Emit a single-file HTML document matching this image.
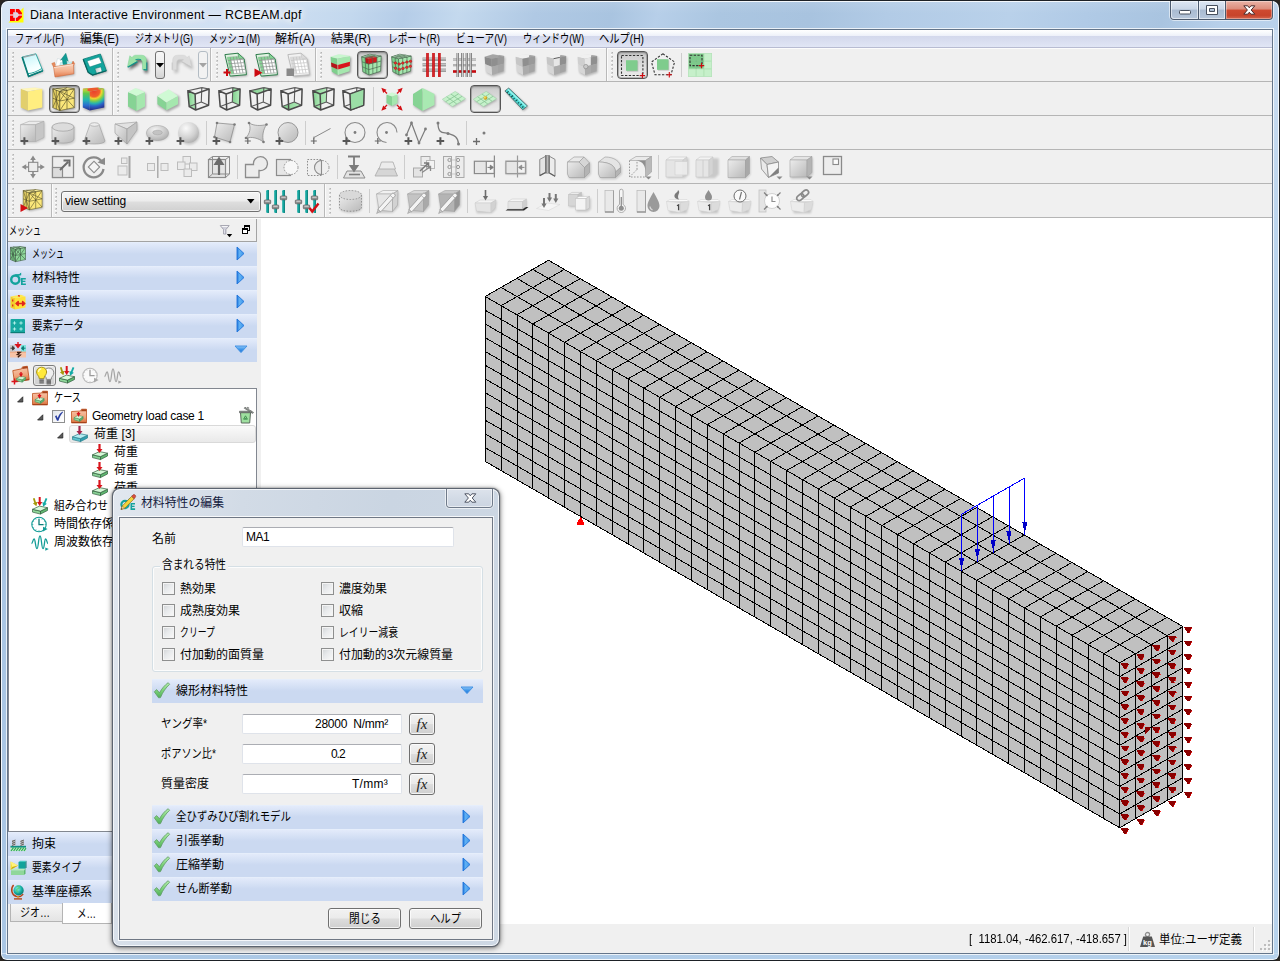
<!DOCTYPE html>
<html lang="ja"><head><meta charset="utf-8"><title>Diana Interactive Environment — RCBEAM.dpf</title>
<style>
html,body{margin:0;padding:0}
body{width:1280px;height:961px;overflow:hidden;background:#2b2620;position:relative;font-family:"Liberation Sans", sans-serif;font-size:12px}
body div,body span.tx,body svg.jp,body svg.ic{position:absolute;box-sizing:border-box}
span.tx{white-space:pre;font-family:"Liberation Sans", sans-serif}
svg.jp,svg.ic{overflow:visible;display:block}
svg.jp text{font-family:"Liberation Sans","Noto Sans CJK JP",sans-serif;font-size:12px}
</style></head><body>
<div style="left:0px;top:0px;width:1280px;height:961px;border-radius:8px 8px 7px 7px;background:#1d2126;"></div>
<div style="left:1px;top:1px;width:1278px;height:959px;border-radius:7px 7px 6px 6px;background:#f4f8fc;"></div>
<div style="left:2px;top:2px;width:1276px;height:957px;border-radius:6px 6px 5px 5px;background:linear-gradient(105deg,#d7e5f4 0%,#d0e0f2 17%,#c3d8ee 23%,#b5cde8 26.5%,#c4d9ee 30%,#b0c9e4 35%,#a9c4e0 40%,#b7cfe9 43%,#abc6e1 47%,#a8c3df 53%,#b2cbe6 58%,#b9d1ea 66%,#b0cae6 71%,#a9c4e0 76%,#b8d0ea 80%,#bcd4ec 90%,#c5daef 100%);"></div>
<div style="left:2px;top:30px;width:5px;height:923px;background:linear-gradient(#c9dcf1 0%,#a9c6e4 35%,#a9c6e4 100%);"></div>
<div style="left:1273px;top:30px;width:5px;height:923px;background:linear-gradient(#cbddf1 0%,#b7d2ec 30%,#b7d2ec 100%);"></div>
<div style="left:2px;top:954px;width:1276px;height:5px;border-radius:0 0 5px 5px;background:linear-gradient(90deg,#a9c6e4,#b7d2ec);"></div>
<div style="left:2px;top:2px;width:1276px;height:26px;border-radius:6px 6px 0 0;background:linear-gradient(rgba(255,255,255,.10),rgba(255,255,255,0) 45%);"></div>
<div style="left:6px;top:28px;width:1268px;height:927px;border:1px solid rgba(255,255,255,.75);"></div>
<div style="left:7px;top:29px;width:1266px;height:925px;border:1px solid #64758a;background:#f0f0f0;"></div>
<svg class="ic" style="left:8px;top:7px" width="16" height="16" viewBox="0 0 16 16"><path d="M15.5 0.5V15.5H0.5z" fill="#ffff00"/><path d="M2 2H11L14 6V10L10 14H2z" fill="#ff0000"/><path d="M5.2 5.2H9.2L10.8 7.2V8.8L9 10.8H5.2z" fill="#cfe0f3"/><path d="M2 7.3H14V8.7H2zM6.8 2H8V14H6.8z" fill="#f3c9cf" opacity=".9"/></svg>
<span class="tx" style="left:30px;top:6.5px;font-size:12.4px;line-height:17px;color:#000;text-shadow:0 0 6px #fff,0 0 10px #fff,0 0 14px rgba(255,255,255,.9);letter-spacing:0.306px">Diana Interactive Environment — RCBEAM.dpf</span>
<div style="left:1169px;top:1px;width:105px;height:20px;border-radius:0 0 5px 5px;background:rgba(255,255,255,.55);"></div>
<div style="left:1170px;top:1px;width:103px;height:19px;border-radius:0 0 4px 4px;background:#4b5a6e;"></div>
<div style="left:1171px;top:1px;width:27px;height:18px;border-radius:0 0 0 3px;background:linear-gradient(#dde7f3 0%,#c9d6e6 45%,#a9bbd1 50%,#b6c7db 100%);box-shadow:inset 0 0 0 1px rgba(255,255,255,.55);"></div>
<div style="left:1199px;top:1px;width:26px;height:18px;background:linear-gradient(#dde7f3 0%,#c9d6e6 45%,#a9bbd1 50%,#b6c7db 100%);box-shadow:inset 0 0 0 1px rgba(255,255,255,.55);"></div>
<div style="left:1226px;top:1px;width:46px;height:18px;border-radius:0 0 3px 0;background:linear-gradient(#eab3a6 0%,#dc8c7b 45%,#cf4a30 50%,#c8442b 80%,#d4674f 100%);box-shadow:inset 0 0 0 1px rgba(255,255,255,.35);"></div>
<svg class="ic" style="left:1178px;top:9px" width="14" height="7"><rect x="1.500" y="1.500" width="11" height="3.500" rx=".9" fill="#fff" stroke="#47505e" stroke-width="1"/></svg>
<svg class="ic" style="left:1205px;top:4px" width="14" height="12"><path d="M1.500 1.500h11v9h-11z M4.500 4.500v3h5v-3z" fill="#fff" fill-rule="evenodd" stroke="#47505e" stroke-width="1"/></svg>
<svg class="ic" style="left:1243px;top:5px" width="14" height="12"><path d="M0.800 0.800h3.900l1.600 2l1.600-2h3.900l-3.600 4.200l3.600 4.200h-3.900l-1.600-2l-1.600 2h-3.900l3.600-4.200z" fill="#fff" stroke="#4a2a2a" stroke-width="1" stroke-linejoin="round"/></svg>
<div style="left:8px;top:30px;width:1264px;height:18px;background:linear-gradient(#ffffff 0%,#f6f8fc 18%,#edf0f9 35%,#d3d8ec 36%,#d9def0 65%,#e1e6f5 100%);border-bottom:1px solid #b8bcd2;"></div>
<div style="left:8px;top:48px;width:1264px;height:1px;background:#fcfcfc;"></div>
<svg class="jp" style="left:15px;top:31px" width="50" height="15"><text x="0" y="12" fill="#000" textLength="49" lengthAdjust="spacingAndGlyphs">ファイル(F)</text></svg>
<svg class="jp" style="left:80px;top:31px" width="40" height="15"><text x="0" y="12" fill="#000" textLength="39" lengthAdjust="spacingAndGlyphs">編集(E)</text></svg>
<svg class="jp" style="left:135px;top:31px" width="59" height="15"><text x="0" y="12" fill="#000" textLength="58" lengthAdjust="spacingAndGlyphs">ジオメトリ(G)</text></svg>
<svg class="jp" style="left:209px;top:31px" width="52" height="15"><text x="0" y="12" fill="#000" textLength="51" lengthAdjust="spacingAndGlyphs">メッシュ(M)</text></svg>
<svg class="jp" style="left:275px;top:31px" width="41" height="15"><text x="0" y="12" fill="#000" textLength="40" lengthAdjust="spacingAndGlyphs">解析(A)</text></svg>
<svg class="jp" style="left:331px;top:31px" width="41" height="15"><text x="0" y="12" fill="#000" textLength="40" lengthAdjust="spacingAndGlyphs">結果(R)</text></svg>
<svg class="jp" style="left:388px;top:31px" width="53" height="15"><text x="0" y="12" fill="#000" textLength="52" lengthAdjust="spacingAndGlyphs">レポート(R)</text></svg>
<svg class="jp" style="left:456px;top:31px" width="52" height="15"><text x="0" y="12" fill="#000" textLength="51" lengthAdjust="spacingAndGlyphs">ビューア(V)</text></svg>
<svg class="jp" style="left:523px;top:31px" width="62" height="15"><text x="0" y="12" fill="#000" textLength="61" lengthAdjust="spacingAndGlyphs">ウィンドウ(W)</text></svg>
<svg class="jp" style="left:599px;top:31px" width="46" height="15"><text x="0" y="12" fill="#000" textLength="45" lengthAdjust="spacingAndGlyphs">ヘルプ(H)</text></svg>
<div style="left:8px;top:81px;width:1264px;height:1px;background:#b5b5b5;"></div>
<div style="left:8px;top:115px;width:1264px;height:1px;background:#b5b5b5;"></div>
<div style="left:8px;top:149px;width:1264px;height:1px;background:#b5b5b5;"></div>
<div style="left:8px;top:183px;width:1264px;height:1px;background:#b5b5b5;"></div>
<div style="left:8px;top:217px;width:1264px;height:1px;background:#b5b5b5;"></div>
<div style="left:8px;top:218px;width:1264px;height:1px;background:#fbfbfb;"></div>
<div style="left:261px;top:218px;width:1011px;height:706px;background:#fff;"></div>
<div style="left:8px;top:924px;width:1264px;height:29px;background:#f0f0f0;"></div>
<div style="left:1128px;top:927px;width:1px;height:24px;background:#d7d7d7;"></div>
<div style="left:1129px;top:927px;width:1px;height:24px;background:#fff;"></div>
<div style="left:1253px;top:927px;width:1px;height:24px;background:#d7d7d7;"></div>
<div style="left:1254px;top:927px;width:1px;height:24px;background:#fff;"></div>
<svg class="ic" style="left:1260px;top:940px" width="12" height="12"><rect x="8" y="0" width="2" height="2" fill="#bdbdbd"/><rect x="10" y="2" width="1" height="1" fill="#fff"/><rect x="8" y="4" width="2" height="2" fill="#bdbdbd"/><rect x="10" y="6" width="1" height="1" fill="#fff"/><rect x="4" y="4" width="2" height="2" fill="#bdbdbd"/><rect x="6" y="6" width="1" height="1" fill="#fff"/><rect x="8" y="8" width="2" height="2" fill="#bdbdbd"/><rect x="10" y="10" width="1" height="1" fill="#fff"/><rect x="4" y="8" width="2" height="2" fill="#bdbdbd"/><rect x="6" y="10" width="1" height="1" fill="#fff"/><rect x="0" y="8" width="2" height="2" fill="#bdbdbd"/><rect x="2" y="10" width="1" height="1" fill="#fff"/></svg>
<span class="tx" style="left:969px;top:930px;font-size:13.5px;line-height:17.5px;color:#000;transform:scaleX(0.8398);transform-origin:0 0;">[  1181.04, -462.617, -418.657 ]</span>
<svg class="ic" style="left:1139px;top:931px" width="17" height="17"><circle cx="8.5" cy="3.6" r="2.1" fill="none" stroke="#8e8e8e" stroke-width="1.3"/><path d="M4.2 5.5h8.6l3.2 10.5h-15z" fill="#555"/><text x="8.5" y="14" font-family="Liberation Sans" font-size="7.5" font-weight="bold" fill="#fff" text-anchor="middle">kg</text></svg>
<svg class="jp" style="left:1159px;top:931.5px" width="84" height="15"><text x="0" y="12" fill="#000" textLength="83" lengthAdjust="spacingAndGlyphs">単位:ユーザ定義</text></svg>
<svg class="ic" style="left:12px;top:48px" width="3" height="33"><rect x="0" y="4" width="2" height="2" fill="#d2d2d2"/><rect x="1" y="4" width="1" height="1" fill="#b4b4b4"/><rect x="0" y="6" width="1" height="1" fill="#ffffff"/><rect x="0" y="8" width="2" height="2" fill="#d2d2d2"/><rect x="1" y="8" width="1" height="1" fill="#b4b4b4"/><rect x="0" y="10" width="1" height="1" fill="#ffffff"/><rect x="0" y="12" width="2" height="2" fill="#d2d2d2"/><rect x="1" y="12" width="1" height="1" fill="#b4b4b4"/><rect x="0" y="14" width="1" height="1" fill="#ffffff"/><rect x="0" y="16" width="2" height="2" fill="#d2d2d2"/><rect x="1" y="16" width="1" height="1" fill="#b4b4b4"/><rect x="0" y="18" width="1" height="1" fill="#ffffff"/><rect x="0" y="20" width="2" height="2" fill="#d2d2d2"/><rect x="1" y="20" width="1" height="1" fill="#b4b4b4"/><rect x="0" y="22" width="1" height="1" fill="#ffffff"/><rect x="0" y="24" width="2" height="2" fill="#d2d2d2"/><rect x="1" y="24" width="1" height="1" fill="#b4b4b4"/><rect x="0" y="26" width="1" height="1" fill="#ffffff"/><rect x="0" y="28" width="2" height="2" fill="#d2d2d2"/><rect x="1" y="28" width="1" height="1" fill="#b4b4b4"/><rect x="0" y="30" width="1" height="1" fill="#ffffff"/></svg>
<svg class="ic" style="left:20px;top:53px" width="24" height="24"><defs><filter id="sh1" x="-30%" y="-30%" width="160%" height="160%"><feGaussianBlur stdDeviation="1.1"/></filter></defs><path d="M2.200 4L15.900 0.800L22.800 17.800L8.600 23.400z" transform="translate(1,1.2)" fill="#000" opacity="0.28" filter="url(#sh1)"/><defs><linearGradient id="nw1" x1="0" y1="0" x2=".35" y2="1"><stop offset="0" stop-color="#bdf3f8"/><stop offset=".7" stop-color="#f2ffff"/><stop offset="1" stop-color="#ffffff"/></linearGradient></defs><polygon points="2.2,4 15.9,0.8 22.8,17.8 8.6,23.4" fill="url(#nw1)" stroke="#109b94" stroke-width="0.8" stroke-linejoin="round"/><path d="M3 4.300L15.500 1.400" fill="none" stroke="#9aa6a8" stroke-width="1.2"/><path d="M8 20.600C12 20.500 17 18.500 21.600 15.600L22.800 17.800L8.600 23.400z" fill="#ffffff" stroke="#109b94" stroke-width="0.9"/><path d="M2.200 4L8.600 23.400L22.800 17.800" fill="none" stroke="#0b7d77" stroke-width="1.7"/></svg>
<svg class="ic" style="left:51px;top:53px" width="24" height="24"><defs><linearGradient id="op1" x1="0" y1="0" x2="0" y2="1"><stop offset="0" stop-color="#f9d3bd"/><stop offset=".55" stop-color="#f3b08c"/><stop offset="1" stop-color="#e2794a"/></linearGradient></defs><defs><filter id="sh2" x="-30%" y="-30%" width="160%" height="160%"><feGaussianBlur stdDeviation="1.1"/></filter></defs><path d="M3 13.500L22.500 10L23 21L4.500 24z" transform="translate(0.8,1)" fill="#000" opacity="0.28" filter="url(#sh2)"/><polygon points="0.8,10.5 3.5,9.4 5,13.5 2.6,14" fill="#e98d60" stroke="#c9622f" stroke-width="0.5" stroke-linejoin="round"/><polygon points="4.6,13 6.5,5.5 13.5,7.5 12,13.5" fill="#ffffff" stroke="#c5d3d6" stroke-width="0.5" stroke-linejoin="round"/><polygon points="9.5,9.5 22,9 21,12.5 8.5,13.5" fill="#c9f1f3" stroke="#8fd0d3" stroke-width="0.4" stroke-linejoin="round"/><path d="M12.200 11.500L11.300 6.200L9.600 7.200L14.800 0.300L17.200 8.300L15.300 7.100L15.900 11.200z" fill="#109b94" stroke="#0b7d77" stroke-width="0.5"/><polygon points="22,8 23.6,10.5 22.5,13 20.8,11" fill="#e2794a" stroke="#c9622f" stroke-width="0.4" stroke-linejoin="round"/><polygon points="2.6,13.8 22.5,10.8 22.8,20.8 4,24" fill="url(#op1)" stroke="#d2693a" stroke-width="0.6" stroke-linejoin="round"/><path d="M3 14.600L22.400 11.600" fill="none" stroke="#fbe3d4" stroke-width="0.9"/></svg>
<svg class="ic" style="left:82px;top:53px" width="24" height="24"><defs><filter id="sh3" x="-30%" y="-30%" width="160%" height="160%"><feGaussianBlur stdDeviation="1.1"/></filter></defs><path d="M1.200 6.200L18.400 1L24.400 17.800L10.600 22L5.500 18z" transform="translate(1,1.2)" fill="#000" opacity="0.32" filter="url(#sh3)"/><polygon points="1.2,6.2 18.4,1 24.4,17.8 10.6,22 6.2,19.4" fill="#13a59d" stroke="#0b7d77" stroke-width="0.8" stroke-linejoin="round"/><polygon points="5.1,8 17.1,4.1 19.7,10.1 7.7,14" fill="#ffffff" stroke="#0b7d77" stroke-width="0.5" stroke-linejoin="round"/><defs><linearGradient id="sv1" x1="0" y1="0" x2="1" y2="0"><stop offset="0" stop-color="#b9c2c2"/><stop offset="1" stop-color="#ffffff"/></linearGradient></defs><polygon points="12.8,15.6 18.8,13.9 20.1,18.6 14.5,20.3" fill="url(#sv1)" stroke="#0b7d77" stroke-width="0.5" stroke-linejoin="round"/><path d="M1.200 6.200L6.200 19.400L10.600 22L24.400 17.800" fill="none" stroke="#08625d" stroke-width="1.2"/></svg>
<div style="left:112px;top:48px;width:1px;height:33px;background:#b9b9b9;"></div>
<div style="left:113px;top:48px;width:1px;height:33px;background:#fbfbfb;"></div>
<svg class="ic" style="left:117px;top:48px" width="3" height="33"><rect x="0" y="4" width="2" height="2" fill="#d2d2d2"/><rect x="1" y="4" width="1" height="1" fill="#b4b4b4"/><rect x="0" y="6" width="1" height="1" fill="#ffffff"/><rect x="0" y="8" width="2" height="2" fill="#d2d2d2"/><rect x="1" y="8" width="1" height="1" fill="#b4b4b4"/><rect x="0" y="10" width="1" height="1" fill="#ffffff"/><rect x="0" y="12" width="2" height="2" fill="#d2d2d2"/><rect x="1" y="12" width="1" height="1" fill="#b4b4b4"/><rect x="0" y="14" width="1" height="1" fill="#ffffff"/><rect x="0" y="16" width="2" height="2" fill="#d2d2d2"/><rect x="1" y="16" width="1" height="1" fill="#b4b4b4"/><rect x="0" y="18" width="1" height="1" fill="#ffffff"/><rect x="0" y="20" width="2" height="2" fill="#d2d2d2"/><rect x="1" y="20" width="1" height="1" fill="#b4b4b4"/><rect x="0" y="22" width="1" height="1" fill="#ffffff"/><rect x="0" y="24" width="2" height="2" fill="#d2d2d2"/><rect x="1" y="24" width="1" height="1" fill="#b4b4b4"/><rect x="0" y="26" width="1" height="1" fill="#ffffff"/><rect x="0" y="28" width="2" height="2" fill="#d2d2d2"/><rect x="1" y="28" width="1" height="1" fill="#b4b4b4"/><rect x="0" y="30" width="1" height="1" fill="#ffffff"/></svg>
<svg class="ic" style="left:126px;top:53px" width="24" height="24"><defs><filter id="sh4" x="-30%" y="-30%" width="160%" height="160%"><feGaussianBlur stdDeviation="1.6"/></filter></defs><path d="M1.500 13.900L3.800 2.800L5.900 4.500C7 3.200 8 2.200 9.500 2.200H15.500C18.500 2.200 20.300 4 20.300 7V17.300L16.500 16.400V10.500C16.500 8 15.500 6.300 13.500 6.300H10.500C10 6.300 9.600 6.400 9.300 6.800L11.500 8.200z" transform="translate(1.8,3)" fill="#000" opacity="0.6" filter="url(#sh4)"/><path d="M1.500 13.900L3.800 2.800L5.900 4.500C7 3.200 8 2.200 9.500 2.200H15.500C18.500 2.200 20.300 4 20.300 7V17.300L16.500 16.400V10.500C16.500 8 15.500 6.300 13.500 6.300H10.500C10 6.300 9.600 6.400 9.300 6.800L11.500 8.200z" fill="#9de3a8" stroke="#7fd397" stroke-width="0.5"/><path d="M1.700 14.200L11.500 8.600" fill="none" stroke="#12908a" stroke-width="1.3"/><path d="M9.600 6.700C11 6 14 6.200 15 6.800" fill="none" stroke="#1b9a93" stroke-width="1.1"/><path d="M20.800 9.500V16.800L17.500 16.600" fill="none" stroke="#12908a" stroke-width="1.1"/></svg>
<div style="left:155px;top:51px;width:10px;height:28px;border:1px solid #707070;border-radius:3px;background:linear-gradient(#f6f6f6,#ededed 50%,#d3d3d3);"></div>
<svg class="ic" style="left:156px;top:63px" width="8" height="5"><path d="M0 0h8l-4 4.500z" fill="#000"/></svg>
<svg class="ic" style="left:169px;top:53px" width="24" height="24"><g transform="translate(24,0) scale(-1,1)"><defs><filter id="sh5" x="-30%" y="-30%" width="160%" height="160%"><feGaussianBlur stdDeviation="1.6"/></filter></defs><path d="M1.500 13.900L3.800 2.800L5.900 4.500C7 3.200 8 2.200 9.500 2.200H15.500C18.500 2.200 20.300 4 20.300 7V17.300L16.500 16.400V10.500C16.500 8 15.500 6.300 13.500 6.300H10.500C10 6.300 9.600 6.400 9.300 6.800L11.500 8.200z" transform="translate(-1.8,3)" fill="#000" opacity="0.22" filter="url(#sh5)"/><path d="M1.500 13.900L3.800 2.800L5.900 4.500C7 3.200 8 2.200 9.500 2.200H15.500C18.500 2.200 20.300 4 20.300 7V17.300L16.500 16.400V10.500C16.500 8 15.500 6.300 13.500 6.300H10.500C10 6.300 9.600 6.400 9.300 6.800L11.500 8.200z" fill="#dcdcdc" stroke="#d0d0d0" stroke-width="0.5"/><path d="M1.700 14.200L11.500 8.600M20.800 9.500V16.800" fill="none" stroke="#c6c6c6" stroke-width="1"/></g></svg>
<div style="left:198px;top:51px;width:10px;height:28px;border:1px solid #b3bcc4;border-radius:3px;background:#f2f2f2;"></div>
<svg class="ic" style="left:199px;top:63px" width="8" height="5"><path d="M0 0h8l-4 4.500z" fill="#a3a3a3"/></svg>
<div style="left:210px;top:48px;width:1px;height:33px;background:#b9b9b9;"></div>
<div style="left:211px;top:48px;width:1px;height:33px;background:#fbfbfb;"></div>
<svg class="ic" style="left:216px;top:48px" width="3" height="33"><rect x="0" y="4" width="2" height="2" fill="#d2d2d2"/><rect x="1" y="4" width="1" height="1" fill="#b4b4b4"/><rect x="0" y="6" width="1" height="1" fill="#ffffff"/><rect x="0" y="8" width="2" height="2" fill="#d2d2d2"/><rect x="1" y="8" width="1" height="1" fill="#b4b4b4"/><rect x="0" y="10" width="1" height="1" fill="#ffffff"/><rect x="0" y="12" width="2" height="2" fill="#d2d2d2"/><rect x="1" y="12" width="1" height="1" fill="#b4b4b4"/><rect x="0" y="14" width="1" height="1" fill="#ffffff"/><rect x="0" y="16" width="2" height="2" fill="#d2d2d2"/><rect x="1" y="16" width="1" height="1" fill="#b4b4b4"/><rect x="0" y="18" width="1" height="1" fill="#ffffff"/><rect x="0" y="20" width="2" height="2" fill="#d2d2d2"/><rect x="1" y="20" width="1" height="1" fill="#b4b4b4"/><rect x="0" y="22" width="1" height="1" fill="#ffffff"/><rect x="0" y="24" width="2" height="2" fill="#d2d2d2"/><rect x="1" y="24" width="1" height="1" fill="#b4b4b4"/><rect x="0" y="26" width="1" height="1" fill="#ffffff"/><rect x="0" y="28" width="2" height="2" fill="#d2d2d2"/><rect x="1" y="28" width="1" height="1" fill="#b4b4b4"/><rect x="0" y="30" width="1" height="1" fill="#ffffff"/></svg>
<svg class="ic" style="left:223px;top:53px" width="24" height="24"><defs><filter id="sh6" x="-30%" y="-30%" width="160%" height="160%"><feGaussianBlur stdDeviation="1.1"/></filter></defs><path d="M1.900 1.600L15 0.200L21.100 5.800L23.500 21.700L7.100 23.100z" transform="translate(1,1.2)" fill="#000" opacity="0.3" filter="url(#sh6)"/><polygon points="1.9,1.6 15,0.2 21.1,5.8 23.5,21.7 7.1,23.1" fill="#dff3e1" stroke="#2f7d4c" stroke-width="1" stroke-linejoin="round"/><polygon points="15,0.2 21.1,5.8 15.8,6.3" fill="#86d394" stroke="#2f7d4c" stroke-width="0.5" stroke-linejoin="round"/><polygon points="4.3,4.3 14.812,3.508 15.716,6.308 19.878,5.657 22.938,19.767 7.9,20.9" fill="#ffffff" stroke="#8a8f8c" stroke-width="0.5" stroke-linejoin="round"/><polygon points="4.3,4.3 7.22,4.08 10.82,20.68 7.9,20.9" fill="#86d394"/><polygon points="4.3,4.3 14.812,3.508 15.716,6.308 4.984,7.454" fill="#86d394"/><path d="M5.0 7.5L20.0 6.3M5.7 10.8L20.7 9.6M6.4 14.1L21.5 13.0M7.1 17.4L22.2 16.3M7.2 4.1L10.8 20.7M10.3 3.8L13.9 20.4M13.4 3.6L17.0 20.2M17.0 6.0L20.0 20.0" fill="none" stroke="#8a8f8c" stroke-width="0.7"/><path d="M0.500 19.500h7M4 16v7" fill="none" stroke="#cc0a10" stroke-width="2"/></svg>
<svg class="ic" style="left:254px;top:53px" width="24" height="24"><defs><filter id="sh7" x="-30%" y="-30%" width="160%" height="160%"><feGaussianBlur stdDeviation="1.1"/></filter></defs><path d="M1.900 1.600L15 0.200L21.100 5.800L23.500 21.700L7.100 23.100z" transform="translate(1,1.2)" fill="#000" opacity="0.3" filter="url(#sh7)"/><polygon points="1.9,1.6 15,0.2 21.1,5.8 23.5,21.7 7.1,23.1" fill="#dff3e1" stroke="#2f7d4c" stroke-width="1" stroke-linejoin="round"/><polygon points="15,0.2 21.1,5.8 15.8,6.3" fill="#86d394" stroke="#2f7d4c" stroke-width="0.5" stroke-linejoin="round"/><polygon points="4.3,4.3 14.812,3.508 15.716,6.308 19.878,5.657 22.938,19.767 7.9,20.9" fill="#ffffff" stroke="#8a8f8c" stroke-width="0.5" stroke-linejoin="round"/><polygon points="4.3,4.3 7.22,4.08 10.82,20.68 7.9,20.9" fill="#86d394"/><polygon points="4.3,4.3 14.812,3.508 15.716,6.308 4.984,7.454" fill="#86d394"/><path d="M5.0 7.5L20.0 6.3M5.7 10.8L20.7 9.6M6.4 14.1L21.5 13.0M7.1 17.4L22.2 16.3M7.2 4.1L10.8 20.7M10.3 3.8L13.9 20.4M13.4 3.6L17.0 20.2M17.0 6.0L20.0 20.0" fill="none" stroke="#8a8f8c" stroke-width="0.7"/><path d="M0.500 15.500L8.500 19.800L0.500 24z" fill="#cc0a10"/></svg>
<svg class="ic" style="left:286px;top:53px" width="24" height="24"><defs><filter id="sh8" x="-30%" y="-30%" width="160%" height="160%"><feGaussianBlur stdDeviation="1.1"/></filter></defs><path d="M1.900 1.600L15 0.200L21.100 5.800L23.500 21.700L7.100 23.100z" transform="translate(1,1.2)" fill="#000" opacity="0.3" filter="url(#sh8)"/><polygon points="1.9,1.6 15,0.2 21.1,5.8 23.5,21.7 7.1,23.1" fill="#f1f1f1" stroke="#bdbdbd" stroke-width="1" stroke-linejoin="round"/><polygon points="15,0.2 21.1,5.8 15.8,6.3" fill="#dadada" stroke="#bdbdbd" stroke-width="0.5" stroke-linejoin="round"/><polygon points="4.3,4.3 14.812,3.508 15.716,6.308 19.878,5.657 22.938,19.767 7.9,20.9" fill="#ffffff" stroke="#c4c4c4" stroke-width="0.5" stroke-linejoin="round"/><polygon points="4.3,4.3 7.22,4.08 10.82,20.68 7.9,20.9" fill="#dadada"/><polygon points="4.3,4.3 14.812,3.508 15.716,6.308 4.984,7.454" fill="#dadada"/><path d="M5.0 7.5L20.0 6.3M5.7 10.8L20.7 9.6M6.4 14.1L21.5 13.0M7.1 17.4L22.2 16.3M7.2 4.1L10.8 20.7M10.3 3.8L13.9 20.4M13.4 3.6L17.0 20.2M17.0 6.0L20.0 20.0" fill="none" stroke="#c4c4c4" stroke-width="0.7"/><rect x="0.500" y="15.500" width="7.500" height="7.500" fill="#8a8a8a"/></svg>
<div style="left:315px;top:48px;width:1px;height:33px;background:#b9b9b9;"></div>
<div style="left:316px;top:48px;width:1px;height:33px;background:#fbfbfb;"></div>
<svg class="ic" style="left:320px;top:48px" width="3" height="33"><rect x="0" y="4" width="2" height="2" fill="#d2d2d2"/><rect x="1" y="4" width="1" height="1" fill="#b4b4b4"/><rect x="0" y="6" width="1" height="1" fill="#ffffff"/><rect x="0" y="8" width="2" height="2" fill="#d2d2d2"/><rect x="1" y="8" width="1" height="1" fill="#b4b4b4"/><rect x="0" y="10" width="1" height="1" fill="#ffffff"/><rect x="0" y="12" width="2" height="2" fill="#d2d2d2"/><rect x="1" y="12" width="1" height="1" fill="#b4b4b4"/><rect x="0" y="14" width="1" height="1" fill="#ffffff"/><rect x="0" y="16" width="2" height="2" fill="#d2d2d2"/><rect x="1" y="16" width="1" height="1" fill="#b4b4b4"/><rect x="0" y="18" width="1" height="1" fill="#ffffff"/><rect x="0" y="20" width="2" height="2" fill="#d2d2d2"/><rect x="1" y="20" width="1" height="1" fill="#b4b4b4"/><rect x="0" y="22" width="1" height="1" fill="#ffffff"/><rect x="0" y="24" width="2" height="2" fill="#d2d2d2"/><rect x="1" y="24" width="1" height="1" fill="#b4b4b4"/><rect x="0" y="26" width="1" height="1" fill="#ffffff"/><rect x="0" y="28" width="2" height="2" fill="#d2d2d2"/><rect x="1" y="28" width="1" height="1" fill="#b4b4b4"/><rect x="0" y="30" width="1" height="1" fill="#ffffff"/></svg>
<svg class="ic" style="left:329px;top:53px" width="24" height="24"><defs><filter id="sh9" x="-30%" y="-30%" width="160%" height="160%"><feGaussianBlur stdDeviation="1.2"/></filter></defs><path d="M1.600 3.800L9.800 1.200L21.200 3.100L20.600 18.200L9.100 22L2.800 18.800z" transform="translate(1,1.5)" fill="#000" opacity="0.38" filter="url(#sh9)"/><polygon points="1.6,3.8 8.5,5.7 9.1,22 2.8,18.8" fill="#7fcf8d"/><polygon points="8.5,5.7 21.2,3.1 20.6,18.2 9.1,22" fill="#a5e7ae"/><polygon points="1.6,3.8 9.8,1.2 21.2,3.1 8.5,5.7" fill="#c9f7cf"/><polygon points="2.056,9.5 8.728,11.894 8.896,16.458 2.392,13.7" fill="#b5141a"/><polygon points="8.728,11.894 20.972,8.838 20.804,13.066 8.896,16.458" fill="#d9141c"/><path d="M8.5 5.7L9.1 22.0" fill="none" stroke="#d9f7dc" stroke-width="0.5"/></svg>
<div style="left:357px;top:51px;width:31px;height:28px;border:1px solid #555;border-radius:4px;background:linear-gradient(#c9c9c9,#dedede 50%,#ececec);box-shadow:inset 0 0 0 1px rgba(90,90,90,.35),inset 0 2px 2px rgba(0,0,0,.12);"></div>
<svg class="ic" style="left:360px;top:53px" width="24" height="24"><defs><filter id="sh10" x="-30%" y="-30%" width="160%" height="160%"><feGaussianBlur stdDeviation="1.2"/></filter></defs><path d="M1.600 3.800L9.800 1.200L21.200 3.100L20.600 18.200L9.100 22L2.800 18.800z" transform="translate(1,1.5)" fill="#000" opacity="0.38" filter="url(#sh10)"/><polygon points="1.6,3.8 8.5,5.7 9.1,22 2.8,18.8" fill="#7fcf8d" stroke="#4c6b52" stroke-width="0.7" stroke-linejoin="round"/><polygon points="8.5,5.7 21.2,3.1 20.6,18.2 9.1,22" fill="#a5e7ae" stroke="#4c6b52" stroke-width="0.7" stroke-linejoin="round"/><polygon points="1.6,3.8 9.8,1.2 21.2,3.1 8.5,5.7" fill="#c9f7cf" stroke="#4c6b52" stroke-width="0.7" stroke-linejoin="round"/><polygon points="5.05,4.75 8.5,5.7 8.7,11.1333 5.35,9.96667" fill="#b5141a"/><polygon points="8.5,5.7 16.9667,3.96667 16.9,9.13333 8.7,11.1333" fill="#d3181c"/><polygon points="5.05,4.75 8.5,5.7 16.9667,3.96667 12.0167,3.01667" fill="#e23a3a"/><path d="M2.0 8.8L8.7 11.1M8.7 11.1L21.0 8.1M2.4 13.8L8.9 16.6M8.9 16.6L20.8 13.2M5.1 4.8L5.9 20.4M5.1 4.8L15.5 2.1M12.7 4.8L12.9 20.7M12.7 4.8L4.3 2.9M17.0 4.0L16.8 19.5M17.0 4.0L7.1 2.1" fill="none" stroke="#4c6b52" stroke-width="0.7"/></svg>
<svg class="ic" style="left:390px;top:53px" width="24" height="24"><defs><filter id="sh11" x="-30%" y="-30%" width="160%" height="160%"><feGaussianBlur stdDeviation="1.2"/></filter></defs><path d="M1.600 3.800L9.800 1.200L21.200 3.100L20.600 18.200L9.100 22L2.800 18.800z" transform="translate(1,1.5)" fill="#000" opacity="0.38" filter="url(#sh11)"/><polygon points="1.6,3.8 8.5,5.7 9.1,22 2.8,18.8" fill="#7fcf8d" stroke="#4c6b52" stroke-width="0.7" stroke-linejoin="round"/><polygon points="8.5,5.7 21.2,3.1 20.6,18.2 9.1,22" fill="#a5e7ae" stroke="#4c6b52" stroke-width="0.7" stroke-linejoin="round"/><polygon points="1.6,3.8 9.8,1.2 21.2,3.1 8.5,5.7" fill="#c9f7cf" stroke="#4c6b52" stroke-width="0.7" stroke-linejoin="round"/><path d="M2.0 8.8L8.7 11.1M8.7 11.1L21.0 8.1M2.4 13.8L8.9 16.6M8.9 16.6L20.8 13.2M5.1 4.8L5.9 20.4M5.1 4.8L15.5 2.1M12.7 4.8L12.9 20.7M12.7 4.8L4.3 2.9M17.0 4.0L16.8 19.5M17.0 4.0L7.1 2.1" fill="none" stroke="#4c6b52" stroke-width="0.7"/><circle cx="9.2" cy="11.0" r="1.250" fill="#e8302f" stroke="#a5090c" stroke-width=".4"/><circle cx="9.4" cy="16.4" r="1.250" fill="#e8302f" stroke="#a5090c" stroke-width=".4"/><circle cx="12.8" cy="10.1" r="1.250" fill="#e8302f" stroke="#a5090c" stroke-width=".4"/><circle cx="12.9" cy="15.4" r="1.250" fill="#e8302f" stroke="#a5090c" stroke-width=".4"/><circle cx="16.9" cy="9.1" r="1.250" fill="#e8302f" stroke="#a5090c" stroke-width=".4"/><circle cx="16.8" cy="14.3" r="1.250" fill="#e8302f" stroke="#a5090c" stroke-width=".4"/><circle cx="20.5" cy="8.3" r="1.250" fill="#e8302f" stroke="#a5090c" stroke-width=".4"/><circle cx="20.3" cy="13.3" r="1.250" fill="#e8302f" stroke="#a5090c" stroke-width=".4"/><circle cx="5.4" cy="10.0" r="1.250" fill="#e8302f" stroke="#a5090c" stroke-width=".4"/><circle cx="5.6" cy="15.2" r="1.250" fill="#e8302f" stroke="#a5090c" stroke-width=".4"/></svg>
<svg class="ic" style="left:422px;top:53px" width="24" height="24"><path d="M0.500 4.400h23.500v3.500H0.500zM0.500 10h23.500v3.500H0.500zM0.500 15.600h23.500v3.500H0.500z" fill="#9d9d9d"/><path d="M0.500 5.200h23.500v1H0.500zM0.500 10.800h23.500v1H0.500zM0.500 16.400h23.500v1H0.500z" fill="#d2d2d2"/><path d="M4.200 0h2.600v24H4.200zM10.200 0h2.600v24h-2.600zM16.100 0h2.600v24h-2.600z" fill="#c4090e"/><path d="M4.900 0h.7v24h-.7zM10.900 0h.7v24h-.7zM16.800 0h.7v24h-.7z" fill="#e23c3c"/></svg>
<svg class="ic" style="left:453px;top:53px" width="24" height="24"><path d="M0 5.600h23v2H0zM0 11.200h23v2H0z" fill="#8a8a8a"/><path d="M0 6.200h23v.7H0zM0 11.800h23v.7H0z" fill="#dcdcdc"/><path d="M0 17.200h23v2.600H0z" fill="#c4090e"/><path d="M3.500 0h2.400v24H3.500zM8.200 0h2.400v24H8.200zM12.600 0h2.400v24h-2.400zM16.500 0h2.400v24h-2.400z" fill="#6f6f6f"/><path d="M4.300 0h.8v24h-.8zM9 0h.8v24H9zM13.400 0h.8v24h-.8zM17.300 0h.8v24h-.8z" fill="#e4e4e4"/></svg>
<svg class="ic" style="left:483px;top:53px" width="24" height="24"><defs><filter id="sh12" x="-30%" y="-30%" width="160%" height="160%"><feGaussianBlur stdDeviation="1.2"/></filter></defs><path d="M1.600 3.800L9.800 1.200L21.200 3.100L20.600 18.200L9.100 22L2.800 18.800z" transform="translate(1,1.5)" fill="#000" opacity="0.25" filter="url(#sh12)"/><polygon points="1.6,3.8 9.8,1.2 15.5,2.15 14.85,4.4 8.5,5.7" fill="#a4a4a4"/><polygon points="15.5,2.15 9.8,1.2 9.8,1.2" fill="#a4a4a4"/><polygon points="14.85,4.4 15.5,2.15 21.2,3.1" fill="#9c9c9c"/><polygon points="14.85,4.4 15.5,2.15 21.2,3.1 21.2,3.1" fill="#9c9c9c"/><polygon points="1.6,3.8 8.5,5.7 8.8,13.85 2.2,11.3" fill="#8a8a8a"/><polygon points="2.2,11.3 8.8,13.85 9.1,22 2.8,18.8" fill="#d6d6d6"/><polygon points="8.5,5.7 14.85,4.4 14.85,12.25 8.8,13.85" fill="#8f8f8f"/><polygon points="14.85,4.4 21.2,3.1 20.9,10.65 14.85,12.25" fill="#999999"/><polygon points="8.8,13.85 14.85,12.25 14.85,20.1 9.1,22" fill="#a9a9a9"/><polygon points="14.85,12.25 20.9,10.65 20.6,18.2 14.85,20.1" fill="#a4a4a4"/></svg>
<svg class="ic" style="left:514px;top:53px" width="24" height="24"><defs><filter id="sh13" x="-30%" y="-30%" width="160%" height="160%"><feGaussianBlur stdDeviation="1.2"/></filter></defs><path d="M1.600 3.800L9.800 1.200L21.200 3.100L20.600 18.200L9.100 22L2.800 18.800z" transform="translate(1,1.5)" fill="#000" opacity="0.25" filter="url(#sh13)"/><polygon points="1.6,3.8 9.8,1.2 15.5,2.15 14.85,4.4 8.5,5.7" fill="#f0f0f0"/><polygon points="15.5,2.15 9.8,1.2 9.8,1.2" fill="#f0f0f0"/><polygon points="14.85,4.4 15.5,2.15 21.2,3.1" fill="#a2a2a2"/><polygon points="14.85,4.4 15.5,2.15 21.2,3.1 21.2,3.1" fill="#a2a2a2"/><polygon points="1.6,3.8 8.5,5.7 8.8,13.85 2.2,11.3" fill="#c6c6c6"/><polygon points="2.2,11.3 8.8,13.85 9.1,22 2.8,18.8" fill="#d6d6d6"/><polygon points="8.5,5.7 14.85,4.4 14.85,12.25 8.8,13.85" fill="#8f8f8f"/><polygon points="14.85,4.4 21.2,3.1 20.9,10.65 14.85,12.25" fill="#999999"/><polygon points="8.8,13.85 14.85,12.25 14.85,20.1 9.1,22" fill="#ababab"/><polygon points="14.85,12.25 20.9,10.65 20.6,18.2 14.85,20.1" fill="#a4a4a4"/></svg>
<svg class="ic" style="left:545px;top:53px" width="24" height="24"><defs><filter id="sh14" x="-30%" y="-30%" width="160%" height="160%"><feGaussianBlur stdDeviation="1.2"/></filter></defs><path d="M1.600 3.800L9.800 1.200L21.200 3.100L20.600 18.200L9.100 22L2.800 18.800z" transform="translate(1,1.5)" fill="#000" opacity="0.25" filter="url(#sh14)"/><polygon points="1.6,3.8 9.8,1.2 15.5,2.15 14.85,4.4 8.5,5.7" fill="#f0f0f0"/><polygon points="15.5,2.15 9.8,1.2 9.8,1.2" fill="#f0f0f0"/><polygon points="14.85,4.4 15.5,2.15 21.2,3.1" fill="#a2a2a2"/><polygon points="14.85,4.4 15.5,2.15 21.2,3.1 21.2,3.1" fill="#a2a2a2"/><polygon points="1.6,3.8 8.5,5.7 8.8,13.85 2.2,11.3" fill="#c6c6c6"/><polygon points="2.2,11.3 8.8,13.85 9.1,22 2.8,18.8" fill="#d6d6d6"/><polygon points="8.5,5.7 14.85,4.4 14.85,12.25 8.8,13.85" fill="#e6e6e6"/><polygon points="14.85,4.4 21.2,3.1 20.9,10.65 14.85,12.25" fill="#8f8f8f"/><polygon points="8.8,13.85 14.85,12.25 14.85,20.1 9.1,22" fill="#ababab"/><polygon points="14.85,12.25 20.9,10.65 20.6,18.2 14.85,20.1" fill="#a4a4a4"/><path d="M8.5 5.7L14.8 4.4" fill="none" stroke="#5f5f5f" stroke-width="1"/></svg>
<svg class="ic" style="left:576px;top:53px" width="24" height="24"><defs><filter id="sh15" x="-30%" y="-30%" width="160%" height="160%"><feGaussianBlur stdDeviation="1.2"/></filter></defs><path d="M1.600 3.800L9.800 1.200L21.200 3.100L20.600 18.200L9.100 22L2.800 18.800z" transform="translate(1,1.5)" fill="#000" opacity="0.25" filter="url(#sh15)"/><polygon points="1.6,3.8 9.8,1.2 15.5,2.15 14.85,4.4 8.5,5.7" fill="#f0f0f0"/><polygon points="15.5,2.15 9.8,1.2 9.8,1.2" fill="#f0f0f0"/><polygon points="14.85,4.4 15.5,2.15 21.2,3.1" fill="#a2a2a2"/><polygon points="14.85,4.4 15.5,2.15 21.2,3.1 21.2,3.1" fill="#a2a2a2"/><polygon points="1.6,3.8 8.5,5.7 8.8,13.85 2.2,11.3" fill="#cfcfcf"/><polygon points="2.2,11.3 8.8,13.85 9.1,22 2.8,18.8" fill="#d6d6d6"/><polygon points="8.5,5.7 14.85,4.4 14.85,12.25 8.8,13.85" fill="#e6e6e6"/><polygon points="14.85,4.4 21.2,3.1 20.9,10.65 14.85,12.25" fill="#8f8f8f"/><polygon points="8.8,13.85 14.85,12.25 14.85,20.1 9.1,22" fill="#ababab"/><polygon points="14.85,12.25 20.9,10.65 20.6,18.2 14.85,20.1" fill="#a4a4a4"/><circle cx="9.8" cy="13.6" r="2.200" fill="#c9c9c9" stroke="#8f8f8f" stroke-width=".7"/></svg>
<div style="left:606px;top:48px;width:1px;height:33px;background:#b9b9b9;"></div>
<div style="left:607px;top:48px;width:1px;height:33px;background:#fbfbfb;"></div>
<svg class="ic" style="left:611px;top:48px" width="3" height="33"><rect x="0" y="4" width="2" height="2" fill="#d2d2d2"/><rect x="1" y="4" width="1" height="1" fill="#b4b4b4"/><rect x="0" y="6" width="1" height="1" fill="#ffffff"/><rect x="0" y="8" width="2" height="2" fill="#d2d2d2"/><rect x="1" y="8" width="1" height="1" fill="#b4b4b4"/><rect x="0" y="10" width="1" height="1" fill="#ffffff"/><rect x="0" y="12" width="2" height="2" fill="#d2d2d2"/><rect x="1" y="12" width="1" height="1" fill="#b4b4b4"/><rect x="0" y="14" width="1" height="1" fill="#ffffff"/><rect x="0" y="16" width="2" height="2" fill="#d2d2d2"/><rect x="1" y="16" width="1" height="1" fill="#b4b4b4"/><rect x="0" y="18" width="1" height="1" fill="#ffffff"/><rect x="0" y="20" width="2" height="2" fill="#d2d2d2"/><rect x="1" y="20" width="1" height="1" fill="#b4b4b4"/><rect x="0" y="22" width="1" height="1" fill="#ffffff"/><rect x="0" y="24" width="2" height="2" fill="#d2d2d2"/><rect x="1" y="24" width="1" height="1" fill="#b4b4b4"/><rect x="0" y="26" width="1" height="1" fill="#ffffff"/><rect x="0" y="28" width="2" height="2" fill="#d2d2d2"/><rect x="1" y="28" width="1" height="1" fill="#b4b4b4"/><rect x="0" y="30" width="1" height="1" fill="#ffffff"/></svg>
<div style="left:617px;top:51px;width:31px;height:28px;border:1px solid #555;border-radius:4px;background:linear-gradient(#c9c9c9,#dedede 50%,#ececec);box-shadow:inset 0 0 0 1px rgba(90,90,90,.35),inset 0 2px 2px rgba(0,0,0,.12);"></div>
<svg class="ic" style="left:620px;top:53px" width="24" height="24"><rect x="1.500" y="2.500" width="21.400" height="20" fill="none" stroke="#333" stroke-width="1.100" stroke-dasharray="2.300 1.500"/><rect x="7" y="8.200" width="11.300" height="10.400" fill="#9a9f9a" opacity=".55"/><rect x="6" y="7.200" width="11.500" height="10.600" fill="#7fcc8d"/><path d="M22.4 19.9v5.4M19.7 22.6h5.4" stroke="#cf0a10" stroke-width="1.1"/></svg>
<svg class="ic" style="left:651px;top:53px" width="24" height="24"><path d="M11.900 0.800L23.600 9L20 21.700H4L0.500 9z" fill="none" stroke="#333" stroke-width="1.100" stroke-dasharray="2.300 1.500"/><rect x="7" y="7.200" width="11.300" height="10.400" fill="#9a9f9a" opacity=".55"/><rect x="6" y="6.200" width="11.500" height="10.600" fill="#7fcc8d"/><path d="M18.3 19v5.4M15.6 21.700h5.4" stroke="#cf0a10" stroke-width="1.1"/></svg>
<div style="left:681px;top:53px;width:1px;height:24px;background:#cdcdcd;"></div>
<svg class="ic" style="left:688px;top:53px" width="24" height="24"><rect x="0.400" y="0.400" width="23.200" height="23.200" fill="#c6f0ca"/><rect x="0.400" y="0.400" width="15.500" height="15.500" fill="#7cc98a"/><path d="M8.100 0.400v23.200M15.900 0.400v23.200M0.400 8.100h23.200M0.400 15.900h23.200" stroke="#a9deae" stroke-width=".8"/><path d="M8.100 0.400v15.500M0.400 8.100h15.500" stroke="#6ab878" stroke-width=".8"/><rect x="0.400" y="0.400" width="23.200" height="23.200" fill="none" stroke="#b5e3b9" stroke-width=".8"/><rect x="2" y="2.300" width="12" height="10.300" fill="none" stroke="#333" stroke-width="1.100" stroke-dasharray="2.300 1.400"/><path d="M13.5 9.900v5.400M10.800 12.600h5.400" stroke="#cf0a10" stroke-width="1.1"/></svg>
<svg class="ic" style="left:12px;top:82px" width="3" height="33"><rect x="0" y="4" width="2" height="2" fill="#d2d2d2"/><rect x="1" y="4" width="1" height="1" fill="#b4b4b4"/><rect x="0" y="6" width="1" height="1" fill="#ffffff"/><rect x="0" y="8" width="2" height="2" fill="#d2d2d2"/><rect x="1" y="8" width="1" height="1" fill="#b4b4b4"/><rect x="0" y="10" width="1" height="1" fill="#ffffff"/><rect x="0" y="12" width="2" height="2" fill="#d2d2d2"/><rect x="1" y="12" width="1" height="1" fill="#b4b4b4"/><rect x="0" y="14" width="1" height="1" fill="#ffffff"/><rect x="0" y="16" width="2" height="2" fill="#d2d2d2"/><rect x="1" y="16" width="1" height="1" fill="#b4b4b4"/><rect x="0" y="18" width="1" height="1" fill="#ffffff"/><rect x="0" y="20" width="2" height="2" fill="#d2d2d2"/><rect x="1" y="20" width="1" height="1" fill="#b4b4b4"/><rect x="0" y="22" width="1" height="1" fill="#ffffff"/><rect x="0" y="24" width="2" height="2" fill="#d2d2d2"/><rect x="1" y="24" width="1" height="1" fill="#b4b4b4"/><rect x="0" y="26" width="1" height="1" fill="#ffffff"/><rect x="0" y="28" width="2" height="2" fill="#d2d2d2"/><rect x="1" y="28" width="1" height="1" fill="#b4b4b4"/><rect x="0" y="30" width="1" height="1" fill="#ffffff"/></svg>
<svg class="ic" style="left:20px;top:87px" width="24" height="24"><defs><filter id="sh16" x="-30%" y="-30%" width="160%" height="160%"><feGaussianBlur stdDeviation="1.2"/></filter></defs><path d="M0.800 1.800L15 0.600L22.300 1.800V20.600L7.800 23.600L0.800 20.600z" transform="translate(1,1.4)" fill="#000" opacity="0.3" filter="url(#sh16)"/><polygon points="0.8,1.8 7.8,4.4 7.8,23.6 0.8,20.6" fill="#e2cf6c"/><polygon points="7.8,4.4 22.3,1.8 22.3,20.6 7.8,23.6" fill="#ffee80"/><polygon points="0.8,1.8 15,0.6 22.3,1.8 7.8,4.4" fill="#fff6b8"/></svg>
<div style="left:49px;top:85px;width:31px;height:28px;border:1px solid #555;border-radius:4px;background:linear-gradient(#c9c9c9,#dedede 50%,#ececec);box-shadow:inset 0 0 0 1px rgba(90,90,90,.35),inset 0 2px 2px rgba(0,0,0,.12);"></div>
<svg class="ic" style="left:52px;top:87px" width="24" height="24"><defs><filter id="sh17" x="-30%" y="-30%" width="160%" height="160%"><feGaussianBlur stdDeviation="1.2"/></filter></defs><path d="M0.800 1.800L15 0.600L22.300 1.800V20.600L7.800 23.600L0.800 20.600z" transform="translate(1,1.4)" fill="#000" opacity="0.3" filter="url(#sh17)"/><polygon points="0.8,1.8 7.8,4.4 7.8,23.6 0.8,20.6" fill="#ead566" stroke="#6b6432" stroke-width="0.7" stroke-linejoin="round"/><polygon points="7.8,4.4 22.3,1.8 22.3,20.6 7.8,23.6" fill="#fbe77a" stroke="#6b6432" stroke-width="0.7" stroke-linejoin="round"/><polygon points="0.8,1.8 15,0.6 22.3,1.8 7.8,4.4" fill="#fff3a1" stroke="#6b6432" stroke-width="0.7" stroke-linejoin="round"/><path d="M0.800 1.800L7.800 23.600M7.800 4.400L0.800 20.600M7.800 4.400L22.300 20.600M22.300 1.800L7.800 23.600M0.800 11.200L7.800 14L22.300 11.200M4.300 3V22.100M15 3V22.100M7.800 4.400L22.300 11.200M7.800 14L15 3M15 0.600L7.800 4.400M4.300 1.500L15 3" fill="none" stroke="#4b4726" stroke-width="0.6"/></svg>
<svg class="ic" style="left:82px;top:87px" width="24" height="24"><defs><filter id="sh18" x="-30%" y="-30%" width="160%" height="160%"><feGaussianBlur stdDeviation="1.2"/></filter></defs><path d="M0.800 1.800L15 0.600L22.300 1.800V20.600L7.800 23.600L0.800 20.600z" transform="translate(1,1.4)" fill="#000" opacity="0.3" filter="url(#sh18)"/><defs><linearGradient id="rb1" x1="0" y1="0" x2="0" y2="1"><stop offset="0" stop-color="#d8d62c"/><stop offset=".22" stop-color="#5fc84a"/><stop offset=".5" stop-color="#22b6b0"/><stop offset=".75" stop-color="#2a6fd0"/><stop offset="1" stop-color="#2a2f8a"/></linearGradient><radialGradient id="rb2" gradientUnits="userSpaceOnUse" cx="12" cy="4" r="19"><stop offset="0" stop-color="#e8402c"/><stop offset=".3" stop-color="#f0602c"/><stop offset=".4" stop-color="#f2d230"/><stop offset=".52" stop-color="#7fd04a"/><stop offset=".66" stop-color="#27b3ad"/><stop offset=".8" stop-color="#2a62c8"/><stop offset="1" stop-color="#2a2f8a"/></radialGradient></defs><polygon points="0.8,1.8 7.8,4.4 7.8,23.6 0.8,20.6" fill="url(#rb1)"/><polygon points="7.8,4.4 22.3,1.8 22.3,20.6 7.8,23.6" fill="url(#rb2)"/><polygon points="0.8,1.8 15,0.6 22.3,1.8 7.8,4.4" fill="#ec5a2c"/><polygon points="0.8,1.8 6,1.35 5,3.4" fill="#a9d43a"/><polygon points="15,0.6 22.3,1.8 18,2.6" fill="#8fd04a"/></svg>
<div style="left:112px;top:82px;width:1px;height:33px;background:#b9b9b9;"></div>
<div style="left:113px;top:82px;width:1px;height:33px;background:#fbfbfb;"></div>
<svg class="ic" style="left:117px;top:82px" width="3" height="33"><rect x="0" y="4" width="2" height="2" fill="#d2d2d2"/><rect x="1" y="4" width="1" height="1" fill="#b4b4b4"/><rect x="0" y="6" width="1" height="1" fill="#ffffff"/><rect x="0" y="8" width="2" height="2" fill="#d2d2d2"/><rect x="1" y="8" width="1" height="1" fill="#b4b4b4"/><rect x="0" y="10" width="1" height="1" fill="#ffffff"/><rect x="0" y="12" width="2" height="2" fill="#d2d2d2"/><rect x="1" y="12" width="1" height="1" fill="#b4b4b4"/><rect x="0" y="14" width="1" height="1" fill="#ffffff"/><rect x="0" y="16" width="2" height="2" fill="#d2d2d2"/><rect x="1" y="16" width="1" height="1" fill="#b4b4b4"/><rect x="0" y="18" width="1" height="1" fill="#ffffff"/><rect x="0" y="20" width="2" height="2" fill="#d2d2d2"/><rect x="1" y="20" width="1" height="1" fill="#b4b4b4"/><rect x="0" y="22" width="1" height="1" fill="#ffffff"/><rect x="0" y="24" width="2" height="2" fill="#d2d2d2"/><rect x="1" y="24" width="1" height="1" fill="#b4b4b4"/><rect x="0" y="26" width="1" height="1" fill="#ffffff"/><rect x="0" y="28" width="2" height="2" fill="#d2d2d2"/><rect x="1" y="28" width="1" height="1" fill="#b4b4b4"/><rect x="0" y="30" width="1" height="1" fill="#ffffff"/></svg>
<svg class="ic" style="left:127px;top:87px" width="24" height="24"><defs><filter id="sh19" x="-30%" y="-30%" width="160%" height="160%"><feGaussianBlur stdDeviation="1.2"/></filter></defs><path d="M1 5L8.500 1L18 5V19.500L9.500 24L1 19.500z" transform="translate(1,1.4)" fill="#000" opacity="0.3" filter="url(#sh19)"/><polygon points="1,5 9.5,9 9.5,24 1,19.5" fill="#86d394"/><polygon points="9.5,9 18,5 18,19.5 9.5,24" fill="#a5e7ae"/><polygon points="1,5 8.5,1 18,5 9.5,9" fill="#cffad4"/></svg>
<svg class="ic" style="left:156px;top:87px" width="24" height="24"><defs><filter id="sh20" x="-30%" y="-30%" width="160%" height="160%"><feGaussianBlur stdDeviation="1.2"/></filter></defs><path d="M1 8L12 3L22.500 8V17.500L10.500 23.500L1 17.500z" transform="translate(1,1.4)" fill="#000" opacity="0.3" filter="url(#sh20)"/><polygon points="1.4,9 10.3,15.4 10.3,23.3 1.4,17.2" fill="#86d394"/><polygon points="10.3,15.4 22,9 22,17.2 10.3,23.3" fill="#a5e7ae"/><polygon points="1.4,9 12.7,2.2 22,9 10.3,15.4" fill="#cffad4"/></svg>
<svg class="ic" style="left:187px;top:87px" width="24" height="24"><defs><linearGradient id="wg21" x1="0" y1="0" x2="1" y2="0"><stop offset="0" stop-color="#7fce8c"/><stop offset="1" stop-color="#b6eebd"/></linearGradient></defs><polygon points="0.8,3.8 8.1,7 8.7,23 2.2,19.6" fill="url(#wg21)"/><path d="M0.8 3.8L14.8 0.6M2.2 19.6L14.3 15M14.8 0.6L22.1 2M14.3 15L21.6 18.2M14.8 0.6L14.3 15" fill="none" stroke="#5a5a5a" stroke-width="1.1"/><path d="M0.8 3.8L8.1 7M2.2 19.6L8.7 23M8.1 7L22.1 2M8.7 23L21.6 18.2M0.8 3.8L2.2 19.6M8.1 7L8.7 23M22.1 2L21.6 18.2" fill="none" stroke="#4a4a4a" stroke-width="1.5" stroke-linecap="round"/></svg>
<svg class="ic" style="left:218px;top:87px" width="24" height="24"><defs><linearGradient id="wg22" x1="0" y1="0" x2="1" y2="0"><stop offset="0" stop-color="#7fce8c"/><stop offset="1" stop-color="#b6eebd"/></linearGradient></defs><polygon points="14.8,0.6 22.1,2 21.6,18.2 14.3,15" fill="url(#wg22)"/><path d="M0.8 3.8L14.8 0.6M2.2 19.6L14.3 15M14.8 0.6L22.1 2M14.3 15L21.6 18.2M14.8 0.6L14.3 15" fill="none" stroke="#5a5a5a" stroke-width="1.1"/><path d="M0.8 3.8L8.1 7M2.2 19.6L8.7 23M8.1 7L22.1 2M8.7 23L21.6 18.2M0.8 3.8L2.2 19.6M8.1 7L8.7 23M22.1 2L21.6 18.2" fill="none" stroke="#4a4a4a" stroke-width="1.5" stroke-linecap="round"/></svg>
<svg class="ic" style="left:249px;top:87px" width="24" height="24"><defs><linearGradient id="wg23" x1="0" y1="0" x2="1" y2="0"><stop offset="0" stop-color="#7fce8c"/><stop offset="1" stop-color="#b6eebd"/></linearGradient></defs><polygon points="0.8,3.8 14.8,0.6 22.1,2 8.1,7" fill="url(#wg23)"/><path d="M0.8 3.8L14.8 0.6M2.2 19.6L14.3 15M14.8 0.6L22.1 2M14.3 15L21.6 18.2M14.8 0.6L14.3 15" fill="none" stroke="#5a5a5a" stroke-width="1.1"/><path d="M0.8 3.8L8.1 7M2.2 19.6L8.7 23M8.1 7L22.1 2M8.7 23L21.6 18.2M0.8 3.8L2.2 19.6M8.1 7L8.7 23M22.1 2L21.6 18.2" fill="none" stroke="#4a4a4a" stroke-width="1.5" stroke-linecap="round"/></svg>
<svg class="ic" style="left:280px;top:87px" width="24" height="24"><defs><linearGradient id="wg24" x1="0" y1="0" x2="1" y2="0"><stop offset="0" stop-color="#7fce8c"/><stop offset="1" stop-color="#b6eebd"/></linearGradient></defs><polygon points="2.2,19.6 14.3,15 21.6,18.2 8.7,23" fill="url(#wg24)"/><path d="M0.8 3.8L14.8 0.6M2.2 19.6L14.3 15M14.8 0.6L22.1 2M14.3 15L21.6 18.2M14.8 0.6L14.3 15" fill="none" stroke="#5a5a5a" stroke-width="1.1"/><path d="M0.8 3.8L8.1 7M2.2 19.6L8.7 23M8.1 7L22.1 2M8.7 23L21.6 18.2M0.8 3.8L2.2 19.6M8.1 7L8.7 23M22.1 2L21.6 18.2" fill="none" stroke="#4a4a4a" stroke-width="1.5" stroke-linecap="round"/></svg>
<svg class="ic" style="left:312px;top:87px" width="24" height="24"><defs><linearGradient id="wg25" x1="0" y1="0" x2="1" y2="0"><stop offset="0" stop-color="#7fce8c"/><stop offset="1" stop-color="#b6eebd"/></linearGradient></defs><polygon points="0.8,3.8 14.8,0.6 14.3,15 2.2,19.6" fill="url(#wg25)"/><polygon points="0.8,3.8 8.1,7 8.7,23 2.2,19.6" fill="url(#wg25)"/><path d="M0.8 3.8L14.8 0.6M2.2 19.6L14.3 15M14.8 0.6L22.1 2M14.3 15L21.6 18.2M14.8 0.6L14.3 15" fill="none" stroke="#5a5a5a" stroke-width="1.1"/><path d="M0.8 3.8L8.1 7M2.2 19.6L8.7 23M8.1 7L22.1 2M8.7 23L21.6 18.2M0.8 3.8L2.2 19.6M8.1 7L8.7 23M22.1 2L21.6 18.2" fill="none" stroke="#4a4a4a" stroke-width="1.5" stroke-linecap="round"/></svg>
<svg class="ic" style="left:342px;top:87px" width="24" height="24"><defs><linearGradient id="wg26" x1="0" y1="0" x2="1" y2="0"><stop offset="0" stop-color="#7fce8c"/><stop offset="1" stop-color="#b6eebd"/></linearGradient></defs><path d="M0.8 3.8L14.8 0.6M2.2 19.6L14.3 15M14.8 0.6L22.1 2M14.3 15L21.6 18.2M14.8 0.6L14.3 15" fill="none" stroke="#5a5a5a" stroke-width="1.1"/><path d="M0.8 3.8L8.1 7M2.2 19.6L8.7 23M8.1 7L22.1 2M8.7 23L21.6 18.2M0.8 3.8L2.2 19.6M8.1 7L8.7 23M22.1 2L21.6 18.2" fill="none" stroke="#4a4a4a" stroke-width="1.5" stroke-linecap="round"/><polygon points="8.1,7 22.1,2 21.6,18.2 8.7,23" fill="#9bdea6" stroke="#4a4a4a" stroke-width="1.2" stroke-linejoin="round"/></svg>
<div style="left:373px;top:87px;width:1px;height:24px;background:#cdcdcd;"></div>
<svg class="ic" style="left:380px;top:87px" width="24" height="24"><defs><filter id="sh27" x="-30%" y="-30%" width="160%" height="160%"><feGaussianBlur stdDeviation="1"/></filter></defs><path d="M6.500 8L12 6L17.500 8V16L12 19L6.500 16z" transform="translate(0.8,1)" fill="#000" opacity="0.3" filter="url(#sh27)"/><polygon points="6.5,7.5 12,9.5 12,19 6.5,16" fill="#86d394"/><polygon points="12,9.5 17.5,7.5 17.5,16 12,19" fill="#a5e7ae"/><polygon points="6.5,7.5 12,5.5 17.5,7.5 12,9.5" fill="#cffad4"/><g transform="translate(7,6.5) rotate(-135)"><path d="M0 0L5 -2.300V-0.700H8V0.700H5V2.300z" fill="#d30f14" transform="scale(-1,1) translate(-8,0)"/></g><g transform="translate(17,6.5) rotate(-45)"><path d="M0 0L5 -2.300V-0.700H8V0.700H5V2.300z" fill="#d30f14" transform="scale(-1,1) translate(-8,0)"/></g><g transform="translate(7,18) rotate(135)"><path d="M0 0L5 -2.300V-0.700H8V0.700H5V2.300z" fill="#d30f14" transform="scale(-1,1) translate(-8,0)"/></g><g transform="translate(17,18) rotate(45)"><path d="M0 0L5 -2.300V-0.700H8V0.700H5V2.300z" fill="#d30f14" transform="scale(-1,1) translate(-8,0)"/></g></svg>
<svg class="ic" style="left:412px;top:87px" width="24" height="24"><defs><filter id="sh28" x="-30%" y="-30%" width="160%" height="160%"><feGaussianBlur stdDeviation="1.2"/></filter></defs><path d="M1 7L10.500 1L22.500 7V18L10.500 24L1 18z" transform="translate(1,1.4)" fill="#000" opacity="0.3" filter="url(#sh28)"/><defs><linearGradient id="hx1" x1="0" y1="0" x2="1" y2="0"><stop offset="0" stop-color="#7fce8c"/><stop offset="1" stop-color="#9bdea6"/></linearGradient></defs><polygon points="1,7 10.5,1 10.5,24 1,18" fill="#86d394"/><polygon points="10.5,1 22.5,7 22.5,18 10.5,24" fill="#a9e9b2"/></svg>
<svg class="ic" style="left:442px;top:87px" width="24" height="24"><defs><filter id="sh29" x="-30%" y="-30%" width="160%" height="160%"><feGaussianBlur stdDeviation="1"/></filter></defs><path d="M0.300 12.300L13.200 4.400L23.500 11.700L10.400 19.600z" transform="translate(0.8,1.2)" fill="#000" opacity="0.25" filter="url(#sh29)"/><polygon points="0.3,12.3 13.2,4.4 23.5,11.7 10.4,19.6" fill="#c6f1cb" stroke="#9bd3a5" stroke-width="0.5" stroke-linejoin="round"/><path d="M4.6 9.7L14.8 17.0M3.7 14.7L16.6 6.8M8.9 7.0L19.1 14.3M7.0 17.2L20.1 9.3" fill="none" stroke="#86c493" stroke-width="0.8"/></svg>
<div style="left:470px;top:85px;width:31px;height:28px;border:1px solid #555;border-radius:4px;background:linear-gradient(#c9c9c9,#dedede 50%,#ececec);box-shadow:inset 0 0 0 1px rgba(90,90,90,.35),inset 0 2px 2px rgba(0,0,0,.12);"></div>
<svg class="ic" style="left:473px;top:87px" width="24" height="24"><defs><filter id="sh30" x="-30%" y="-30%" width="160%" height="160%"><feGaussianBlur stdDeviation="1"/></filter></defs><path d="M0.300 12.300L13.200 4.400L23.500 11.700L10.400 19.600z" transform="translate(0.8,1.2)" fill="#000" opacity="0.25" filter="url(#sh30)"/><polygon points="0.3,12.3 13.2,4.4 23.5,11.7 10.4,19.6" fill="#c6f1cb" stroke="#9bd3a5" stroke-width="0.5" stroke-linejoin="round"/><path d="M4.6 9.7L14.8 17.0M3.7 14.7L16.6 6.8M8.9 7.0L19.1 14.3M7.0 17.2L20.1 9.3" fill="none" stroke="#86c493" stroke-width="0.8"/><defs><radialGradient id="gd1" cx=".35" cy=".35" r=".7"><stop offset="0" stop-color="#ffe96a"/><stop offset="1" stop-color="#b98a06"/></radialGradient></defs><circle cx="12.300" cy="10.800" r="1.900" fill="url(#gd1)"/></svg>
<svg class="ic" style="left:504px;top:87px" width="24" height="24"><defs><filter id="sh31" x="-30%" y="-30%" width="160%" height="160%"><feGaussianBlur stdDeviation="1"/></filter></defs><path d="M0.900 3.900L4.700 1.100L23.400 18.900L18.700 22.700z" transform="translate(1,1.2)" fill="#000" opacity="0.35" filter="url(#sh31)"/><defs><linearGradient id="rl1" x1="0" y1="1" x2="1" y2="0"><stop offset=".3" stop-color="#22b8b2"/><stop offset=".6" stop-color="#7ff0ea"/><stop offset=".8" stop-color="#3fcfc9"/></linearGradient></defs><polygon points="0.9,3.9 4.7,1.1 23.4,18.9 18.7,22.7" fill="#4fd8d2" stroke="#4f5f5f" stroke-width="0.8" stroke-linejoin="round"/><path d="M3.800 2.300L22.200 19.800" fill="none" stroke="#9af5f0" stroke-width="1.3"/><path d="M2.800 5.800l1.800-1.500M5 7.900l1.200-1M7.200 10l1.800-1.500M9.400 12.100l1.200-1M11.600 14.200l1.800-1.500M13.800 16.300l1.200-1M16 18.400l1.800-1.500M18.200 20.500l1.200-1" fill="none" stroke="#0c4f4c" stroke-width="1.1"/></svg>
<svg class="ic" style="left:12px;top:116px" width="3" height="33"><rect x="0" y="4" width="2" height="2" fill="#d2d2d2"/><rect x="1" y="4" width="1" height="1" fill="#b4b4b4"/><rect x="0" y="6" width="1" height="1" fill="#ffffff"/><rect x="0" y="8" width="2" height="2" fill="#d2d2d2"/><rect x="1" y="8" width="1" height="1" fill="#b4b4b4"/><rect x="0" y="10" width="1" height="1" fill="#ffffff"/><rect x="0" y="12" width="2" height="2" fill="#d2d2d2"/><rect x="1" y="12" width="1" height="1" fill="#b4b4b4"/><rect x="0" y="14" width="1" height="1" fill="#ffffff"/><rect x="0" y="16" width="2" height="2" fill="#d2d2d2"/><rect x="1" y="16" width="1" height="1" fill="#b4b4b4"/><rect x="0" y="18" width="1" height="1" fill="#ffffff"/><rect x="0" y="20" width="2" height="2" fill="#d2d2d2"/><rect x="1" y="20" width="1" height="1" fill="#b4b4b4"/><rect x="0" y="22" width="1" height="1" fill="#ffffff"/><rect x="0" y="24" width="2" height="2" fill="#d2d2d2"/><rect x="1" y="24" width="1" height="1" fill="#b4b4b4"/><rect x="0" y="26" width="1" height="1" fill="#ffffff"/><rect x="0" y="28" width="2" height="2" fill="#d2d2d2"/><rect x="1" y="28" width="1" height="1" fill="#b4b4b4"/><rect x="0" y="30" width="1" height="1" fill="#ffffff"/></svg>
<svg class="ic" style="left:20px;top:121px" width="24" height="24"><defs><linearGradient id="gg32" x1="0" y1="0" x2="1" y2="1"><stop offset="0" stop-color="#ececec"/><stop offset="1" stop-color="#b9b9b9"/></linearGradient></defs><defs><filter id="sh33" x="-30%" y="-30%" width="160%" height="160%"><feGaussianBlur stdDeviation="1"/></filter></defs><path d="M0.600 3.500L9 0.300H24V16.500L15.600 20.500H0.600z" transform="translate(0.8,1.2)" fill="#000" opacity="0.18" filter="url(#sh33)"/><polygon points="0.6,3.7 9.1,0.3 24,0.3 15.6,3.7" fill="#ebebeb" stroke="#adadad" stroke-width="0.6" stroke-linejoin="round"/><polygon points="0.6,3.7 15.6,3.7 15.6,20.5 0.6,20.5" fill="url(#gg32)" stroke="#adadad" stroke-width="0.6" stroke-linejoin="round"/><polygon points="15.6,3.7 24,0.3 24,16.5 15.6,20.5" fill="#c6c6c6" stroke="#adadad" stroke-width="0.6" stroke-linejoin="round"/><path d="M4.400 16.200v7.600M0.600 20h7.600" stroke="#565656" stroke-width="2"/></svg>
<svg class="ic" style="left:51px;top:121px" width="24" height="24"><defs><linearGradient id="gg34" x1="0" y1="0" x2="1" y2="1"><stop offset="0" stop-color="#ececec"/><stop offset="1" stop-color="#b9b9b9"/></linearGradient></defs><defs><filter id="sh35" x="-30%" y="-30%" width="160%" height="160%"><feGaussianBlur stdDeviation="1"/></filter></defs><path d="M1 6C1 0 23 0 23 6V18C23 24 1 24 1 18z" transform="translate(0.8,1.2)" fill="#000" opacity="0.18" filter="url(#sh35)"/><path d="M1 6V18C1 23.500 23 23.500 23 18V6z" fill="url(#gg34)" stroke="#9c9c9c" stroke-width="0.6"/><ellipse cx="12" cy="6" rx="11" ry="4.200" fill="#dcdcdc" stroke="#9c9c9c" stroke-width=".7"/><path d="M4.400 16.200v7.600M0.600 20h7.600" stroke="#565656" stroke-width="2"/></svg>
<svg class="ic" style="left:82px;top:121px" width="24" height="24"><defs><linearGradient id="gg36" x1="0" y1="0" x2="1" y2="1"><stop offset="0" stop-color="#ececec"/><stop offset="1" stop-color="#b9b9b9"/></linearGradient></defs><defs><filter id="sh37" x="-30%" y="-30%" width="160%" height="160%"><feGaussianBlur stdDeviation="1"/></filter></defs><path d="M8 3H17L23 21H2z" transform="translate(0.8,1.2)" fill="#000" opacity="0.18" filter="url(#sh37)"/><path d="M8 3.500L2 20C2 24 23 24 23 20L17 3.500z" fill="url(#gg36)" stroke="#9c9c9c" stroke-width="0.6"/><ellipse cx="12.500" cy="3.500" rx="4.500" ry="1.800" fill="#ededed" stroke="#9c9c9c" stroke-width=".6"/><path d="M4.400 16.200v7.600M0.600 20h7.600" stroke="#565656" stroke-width="2"/></svg>
<svg class="ic" style="left:114px;top:121px" width="24" height="24"><defs><linearGradient id="gg38" x1="0" y1="0" x2="1" y2="1"><stop offset="0" stop-color="#ececec"/><stop offset="1" stop-color="#b9b9b9"/></linearGradient></defs><defs><filter id="sh39" x="-30%" y="-30%" width="160%" height="160%"><feGaussianBlur stdDeviation="1"/></filter></defs><path d="M1 3L23 1V9L13 23L1 12z" transform="translate(0.8,1.2)" fill="#000" opacity="0.18" filter="url(#sh39)"/><polygon points="1,3 23,1 13,8" fill="#e2e2e2" stroke="#9c9c9c" stroke-width="0.6" stroke-linejoin="round"/><polygon points="1,3 13,8 13,23 1,12" fill="url(#gg38)" stroke="#9c9c9c" stroke-width="0.6" stroke-linejoin="round"/><polygon points="13,8 23,1 23,9 13,23" fill="#c4c4c4" stroke="#9c9c9c" stroke-width="0.6" stroke-linejoin="round"/><path d="M4.400 16.200v7.600M0.600 20h7.600" stroke="#565656" stroke-width="2"/></svg>
<svg class="ic" style="left:145px;top:121px" width="24" height="24"><defs><filter id="sh40" x="-30%" y="-30%" width="160%" height="160%"><feGaussianBlur stdDeviation="1"/></filter></defs><path d="M1 12C1 3 23 3 23 12S1 21 1 12z" transform="translate(0.8,1.2)" fill="#000" opacity="0.18" filter="url(#sh40)"/><defs><radialGradient id="tor" cx=".4" cy=".3" r=".8"><stop offset="0" stop-color="#f4f4f4"/><stop offset="1" stop-color="#a9a9a9"/></radialGradient></defs><path d="M12.500 4.500C6 4.500 1.500 7.800 1.500 12S6 19.500 12.500 19.500S23.500 16.200 23.500 12S19 4.500 12.500 4.500zM12.500 9.200c2.800 0 4.800 1 4.800 2.300s-2 2.300-4.800 2.300s-4.800-1-4.800-2.300s2-2.300 4.800-2.300z" fill="url(#tor)" stroke="#9c9c9c" stroke-width=".5" fill-rule="evenodd"/><path d="M4.400 16.200v7.600M0.600 20h7.600" stroke="#565656" stroke-width="2"/></svg>
<svg class="ic" style="left:176px;top:121px" width="24" height="24"><defs><radialGradient id="sph" cx=".38" cy=".3" r=".8"><stop offset="0" stop-color="#fafafa"/><stop offset=".6" stop-color="#d0d0d0"/><stop offset="1" stop-color="#a6a6a6"/></radialGradient></defs><defs><filter id="sh41" x="-30%" y="-30%" width="160%" height="160%"><feGaussianBlur stdDeviation="1"/></filter></defs><path d="M2 12a10.500 10.500 0 1 0 21 0a10.500 10.500 0 1 0 -21 0z" transform="translate(0.8,1.2)" fill="#000" opacity="0.18" filter="url(#sh41)"/><circle cx="12.500" cy="11.500" r="10.500" fill="url(#sph)"/><path d="M4.400 16.200v7.600M0.600 20h7.600" stroke="#565656" stroke-width="2"/></svg>
<div style="left:206px;top:121px;width:1px;height:24px;background:#cdcdcd;"></div>
<svg class="ic" style="left:212px;top:121px" width="24" height="24"><defs><linearGradient id="gg42" x1="0" y1="0" x2="1" y2="1"><stop offset="0" stop-color="#ececec"/><stop offset="1" stop-color="#b9b9b9"/></linearGradient></defs><defs><filter id="sh43" x="-30%" y="-30%" width="160%" height="160%"><feGaussianBlur stdDeviation="1"/></filter></defs><path d="M5 2L22.500 3.500L18 21L2.500 16z" transform="translate(0.8,1.2)" fill="#000" opacity="0.18" filter="url(#sh43)"/><polygon points="5,2 22.5,3.5 18,21 2.5,16" fill="url(#gg42)" stroke="#8f8f8f" stroke-width="0.8" stroke-linejoin="round"/><circle cx="5" cy="2" r="1.3" fill="#7c7c7c"/><circle cx="22.5" cy="3.5" r="1.3" fill="#7c7c7c"/><circle cx="18" cy="21" r="1.3" fill="#7c7c7c"/><circle cx="2.5" cy="16" r="1.3" fill="#7c7c7c"/><path d="M4.400 16.200v7.600M0.600 20h7.600" stroke="#565656" stroke-width="2"/></svg>
<svg class="ic" style="left:244px;top:121px" width="24" height="24"><defs><linearGradient id="gg44" x1="0" y1="0" x2="1" y2="1"><stop offset="0" stop-color="#ececec"/><stop offset="1" stop-color="#b9b9b9"/></linearGradient></defs><path d="M5 2C10 5 17 5 22.500 3.500C19 9 18 15 19.500 21C14 17 8 15.500 2 17C6 12 7 7 5 2z" fill="url(#gg44)" stroke="#8f8f8f" stroke-width="0.8"/><circle cx="5" cy="2" r="1.3" fill="#7c7c7c"/><circle cx="22.5" cy="3.5" r="1.3" fill="#7c7c7c"/><circle cx="19.5" cy="21" r="1.3" fill="#7c7c7c"/><circle cx="2" cy="17" r="1.3" fill="#7c7c7c"/><path d="M3.800 17v6M0.800 20h6" stroke="#666" stroke-width="1.200"/></svg>
<svg class="ic" style="left:275px;top:121px" width="24" height="24"><defs><linearGradient id="gg45" x1="0" y1="0" x2="1" y2="1"><stop offset="0" stop-color="#ececec"/><stop offset="1" stop-color="#b9b9b9"/></linearGradient></defs><circle cx="13" cy="11.500" r="10" fill="url(#gg45)" stroke="#8f8f8f" stroke-width=".9"/><path d="M4.400 16.200v7.600M0.600 20h7.600" stroke="#565656" stroke-width="2"/></svg>
<div style="left:305px;top:121px;width:1px;height:24px;background:#cdcdcd;"></div>
<svg class="ic" style="left:310px;top:121px" width="24" height="24"><path d="M4 16.500L20.500 7.500" fill="none" stroke="#8a8a8a" stroke-width="1"/><circle cx="4" cy="16.5" r="1" fill="#9a9a9a"/><path d="M3.800 17v6M0.800 20h6" stroke="#666" stroke-width="1.200"/></svg>
<svg class="ic" style="left:342px;top:121px" width="24" height="24"><circle cx="13" cy="11.500" r="10" fill="none" stroke="#8a8a8a" stroke-width="1.100"/><circle cx="13" cy="11.5" r="1.4" fill="#7c7c7c"/><path d="M4.400 16.200v7.600M0.600 20h7.600" stroke="#565656" stroke-width="2"/></svg>
<svg class="ic" style="left:374px;top:121px" width="24" height="24"><path d="M12.500 21.500A10 10 0 1 1 23 11.500" fill="none" stroke="#8a8a8a" stroke-width="1.1"/><circle cx="12.5" cy="11.5" r="1.4" fill="#7c7c7c"/><path d="M3.800 17v6M0.800 20h6" stroke="#666" stroke-width="1.200"/></svg>
<svg class="ic" style="left:404px;top:121px" width="24" height="24"><path d="M2.500 14L7.500 2L15 22L21.500 8" fill="none" stroke="#7c7c7c" stroke-width="1.2"/><circle cx="2.5" cy="14" r="1.4" fill="#7c7c7c"/><circle cx="7.5" cy="2" r="1.4" fill="#7c7c7c"/><circle cx="15" cy="22" r="1.4" fill="#7c7c7c"/><circle cx="21.5" cy="8" r="1.4" fill="#7c7c7c"/><path d="M4.400 16.200v7.600M0.600 20h7.600" stroke="#565656" stroke-width="2"/></svg>
<svg class="ic" style="left:436px;top:121px" width="24" height="24"><path d="M2 2C2 14 8 11 12 12.500S22 14 22.500 23" fill="none" stroke="#7c7c7c" stroke-width="1.3"/><circle cx="2" cy="2" r="1.5" fill="#7c7c7c"/><circle cx="12" cy="12.5" r="1.5" fill="#7c7c7c"/><circle cx="22.5" cy="23" r="1.5" fill="#7c7c7c"/><path d="M4.400 16.200v7.600M0.600 20h7.600" stroke="#565656" stroke-width="2"/></svg>
<div style="left:466px;top:121px;width:1px;height:24px;background:#cdcdcd;"></div>
<svg class="ic" style="left:472px;top:121px" width="24" height="24"><circle cx="12" cy="12" r="1.5" fill="#7c7c7c"/><path d="M4.500 17v7M1 20.500h7" stroke="#6a6a6a" stroke-width="1.300"/></svg>
<svg class="ic" style="left:12px;top:150px" width="3" height="33"><rect x="0" y="4" width="2" height="2" fill="#d2d2d2"/><rect x="1" y="4" width="1" height="1" fill="#b4b4b4"/><rect x="0" y="6" width="1" height="1" fill="#ffffff"/><rect x="0" y="8" width="2" height="2" fill="#d2d2d2"/><rect x="1" y="8" width="1" height="1" fill="#b4b4b4"/><rect x="0" y="10" width="1" height="1" fill="#ffffff"/><rect x="0" y="12" width="2" height="2" fill="#d2d2d2"/><rect x="1" y="12" width="1" height="1" fill="#b4b4b4"/><rect x="0" y="14" width="1" height="1" fill="#ffffff"/><rect x="0" y="16" width="2" height="2" fill="#d2d2d2"/><rect x="1" y="16" width="1" height="1" fill="#b4b4b4"/><rect x="0" y="18" width="1" height="1" fill="#ffffff"/><rect x="0" y="20" width="2" height="2" fill="#d2d2d2"/><rect x="1" y="20" width="1" height="1" fill="#b4b4b4"/><rect x="0" y="22" width="1" height="1" fill="#ffffff"/><rect x="0" y="24" width="2" height="2" fill="#d2d2d2"/><rect x="1" y="24" width="1" height="1" fill="#b4b4b4"/><rect x="0" y="26" width="1" height="1" fill="#ffffff"/><rect x="0" y="28" width="2" height="2" fill="#d2d2d2"/><rect x="1" y="28" width="1" height="1" fill="#b4b4b4"/><rect x="0" y="30" width="1" height="1" fill="#ffffff"/></svg>
<svg class="ic" style="left:21px;top:155px" width="24" height="24"><path d="M12 4V20M4 12H20" fill="none" stroke="#8a8a8a" stroke-width="1.6"/><path d="M12 0.400L14.800 5H9.200zM12 23.600L14.800 19H9.200zM0.600 12L5.200 9.200V14.800zM23.800 12L19.200 9.200V14.800z" fill="#8a8a8a"/><rect x="7.600" y="7.300" width="9.200" height="9.200" fill="#ececec" stroke="#8a8a8a" stroke-width="1.100"/></svg>
<svg class="ic" style="left:51px;top:155px" width="24" height="24"><rect x="1.500" y="1.500" width="21" height="21" fill="#ededed" stroke="#8c8c8c" stroke-width="1.300"/><rect x="1.500" y="12.500" width="10" height="10" fill="#dcdcdc" stroke="#8c8c8c" stroke-width="1.200"/><path d="M9 15L17 7M12.500 5.500H18.500V11.500" fill="none" stroke="#6c6c6c" stroke-width="2"/></svg>
<svg class="ic" style="left:82px;top:155px" width="24" height="24"><path d="M19.800 6.500A10 10 0 1 0 21.500 14" fill="none" stroke="#8a8a8a" stroke-width="2.3"/><path d="M15.500 7.500L23 2.500V10z" fill="#8a8a8a"/><rect x="8" y="8" width="8" height="8" transform="rotate(45 12 12)" fill="#f4f4f4" stroke="#8a8a8a" stroke-width="1.100"/></svg>
<svg class="ic" style="left:114px;top:155px" width="24" height="24"><rect x="7.500" y="3" width="5.500" height="5.500" fill="#ebebeb" stroke="#bcbcbc"/><rect x="4" y="11" width="9" height="9" fill="#ebebeb" stroke="#bcbcbc"/><path d="M15.500 1v22" stroke="#a6a6a6" stroke-width="2"/></svg>
<svg class="ic" style="left:146px;top:155px" width="24" height="24"><rect x="1.500" y="8.500" width="7" height="7" fill="#ebebeb" stroke="#bcbcbc"/><rect x="15" y="8.500" width="7" height="7" fill="#ebebeb" stroke="#bcbcbc"/><path d="M11.800 1v22" stroke="#a6a6a6" stroke-width="1.400"/></svg>
<svg class="ic" style="left:176px;top:155px" width="24" height="24"><rect x="7" y="1.5" width="7.500" height="7.500" fill="#ebebeb" stroke="#bcbcbc"/><rect x="1.5" y="7" width="7.500" height="7.500" fill="#ebebeb" stroke="#bcbcbc"/><rect x="13.5" y="8" width="7.500" height="7.500" fill="#ebebeb" stroke="#bcbcbc"/><rect x="8" y="14" width="7.500" height="7.500" fill="#ebebeb" stroke="#bcbcbc"/></svg>
<svg class="ic" style="left:207px;top:155px" width="24" height="24"><rect x="1.500" y="4.500" width="17" height="18" fill="#e4e4e4" stroke="#8c8c8c" stroke-width="1.200"/><path d="M1.500 4.500L5.500 1.500H22.500V19L18.500 22.500M18.500 4.500L22.500 1.500M5.500 1.500V19H22.500M5.500 19L1.500 22.500" fill="none" stroke="#8c8c8c" stroke-width="1"/><path d="M12 20V9H8.500L12 3.500L15.500 9H12" fill="#6c6c6c" stroke="#6c6c6c" stroke-width="2.2"/></svg>
<div style="left:237px;top:155px;width:1px;height:24px;background:#cdcdcd;"></div>
<svg class="ic" style="left:244px;top:155px" width="24" height="24"><path d="M1.500 9.500H9.500A7 7 0 1 1 15 15.500V22.500H1.500z" fill="#ececec" stroke="#8c8c8c" stroke-width="1.3"/></svg>
<svg class="ic" style="left:275px;top:155px" width="24" height="24"><rect x="1.500" y="4.500" width="14" height="16" fill="#e6e6e6" stroke="#8c8c8c" stroke-width="1.200"/><circle cx="16" cy="12.500" r="7" fill="#f7f7f7" stroke="#8f8f8f" stroke-width="1" stroke-dasharray="1.600 1.400"/></svg>
<svg class="ic" style="left:306px;top:155px" width="24" height="24"><rect x="1.500" y="4.500" width="14" height="16" fill="none" stroke="#8f8f8f" stroke-width="1" stroke-dasharray="1.600 1.400"/><circle cx="16" cy="12.500" r="7" fill="none" stroke="#8f8f8f" stroke-width="1" stroke-dasharray="1.600 1.400"/><path d="M15.500 5.500A7 7 0 0 0 15.500 19.500z" fill="#e9e9e9" stroke="#8c8c8c" stroke-width="1.1"/></svg>
<div style="left:337px;top:155px;width:1px;height:24px;background:#cdcdcd;"></div>
<svg class="ic" style="left:343px;top:155px" width="24" height="24"><polygon points="4,16 18,16 22,23 0.5,23" fill="#e3e3e3" stroke="#8c8c8c" stroke-width="1" stroke-linejoin="round"/><path d="M6 19.500h11" fill="none" stroke="#7c7c7c" stroke-width="1.6"/><path d="M5 1.500h12" fill="none" stroke="#7c7c7c" stroke-width="2"/><path d="M11 2V11H7.500L11 16L14.500 11H11" fill="#7c7c7c" stroke="#7c7c7c" stroke-width="1.8"/></svg>
<svg class="ic" style="left:374px;top:155px" width="24" height="24"><polygon points="5,13 20,13 23.5,21 1,21" fill="#d6d6d6" stroke="#a9a9a9" stroke-width="0.8" stroke-linejoin="round"/><polygon points="7.5,7 19,7 21.5,14 5,14" fill="#ececec" stroke="#a9a9a9" stroke-width="0.8" stroke-linejoin="round"/></svg>
<div style="left:404px;top:155px;width:1px;height:24px;background:#cdcdcd;"></div>
<svg class="ic" style="left:412px;top:155px" width="24" height="24"><rect x="9" y="1.500" width="9" height="9" fill="#ececec" stroke="#a9a9a9"/><rect x="14.500" y="5.500" width="8" height="8" fill="#f3f3f3" stroke="#b9b9b9"/><rect x="1.500" y="13" width="9" height="9" fill="#e4e4e4" stroke="#a9a9a9"/><path d="M8 16L16 8.500M12 8H16.500V12.500" fill="none" stroke="#7a7a7a" stroke-width="1.6"/><path d="M10 17.500L18 12M14 11.500H18.500V16" fill="none" stroke="#8a8a8a" stroke-width="1.3"/></svg>
<svg class="ic" style="left:442px;top:155px" width="24" height="24"><rect x="1.500" y="1.500" width="8" height="21" fill="#ececec" stroke="#a9a9a9"/><rect x="14" y="1.500" width="8" height="21" fill="#ececec" stroke="#a9a9a9"/><circle cx="7.5" cy="5" r="1.600" fill="#f7f7f7" stroke="#8a8a8a" stroke-width=".9"/><circle cx="7.5" cy="12" r="1.600" fill="#f7f7f7" stroke="#8a8a8a" stroke-width=".9"/><circle cx="7.5" cy="19" r="1.600" fill="#f7f7f7" stroke="#8a8a8a" stroke-width=".9"/><circle cx="16" cy="5" r="1.600" fill="#f7f7f7" stroke="#8a8a8a" stroke-width=".9"/><circle cx="16" cy="12" r="1.600" fill="#f7f7f7" stroke="#8a8a8a" stroke-width=".9"/><circle cx="16" cy="19" r="1.600" fill="#f7f7f7" stroke="#8a8a8a" stroke-width=".9"/><path d="M7.500 5H16M7.500 12H16M7.500 19H16" fill="none" stroke="#b9b9b9" stroke-width="0.7"/></svg>
<svg class="ic" style="left:473px;top:155px" width="24" height="24"><rect x="1.400" y="6.300" width="20" height="12.200" fill="#f4f4f4" stroke="#8a8a8a" stroke-width="1.300"/><rect x="2" y="6.900" width="11.200" height="11" fill="#e6e6e6"/><path d="M13.300 6.300v12.200M21.400 0.500v22" fill="none" stroke="#8a8a8a" stroke-width="1.2"/><path d="M14.500 12.400H19M17.300 10.200L20.300 12.400L17.300 14.600z" fill="#7a7a7a" stroke="#7a7a7a" stroke-width="1"/></svg>
<svg class="ic" style="left:504px;top:155px" width="24" height="24"><defs><filter id="sh46" x="-30%" y="-30%" width="160%" height="160%"><feGaussianBlur stdDeviation="1.2"/></filter></defs><path d="M2 6.300h19.600v12.200H2z" transform="translate(0,0.5)" fill="#000" opacity="0.25" filter="url(#sh46)"/><rect x="2" y="6.300" width="19.600" height="12.200" fill="#f2f2f2" stroke="#9a9a9a" stroke-width="1.500"/><rect x="2.700" y="7" width="10.300" height="10.800" fill="#e6e6e6"/><path d="M13.500 0.500v22" fill="none" stroke="#9a9a9a" stroke-width="1.2"/><path d="M20.500 12.400H16M17.700 10.200L14.700 12.400L17.700 14.600z" fill="#8a8a8a" stroke="#8a8a8a" stroke-width="1"/></svg>
<svg class="ic" style="left:535px;top:155px" width="24" height="24"><polygon points="4.75,4.4 10.6,1.25 10.6,17.5 4.75,20.6" fill="#e4e4e4" stroke="#7f7f7f" stroke-width="0.9" stroke-linejoin="round"/><polygon points="14.4,1.25 20,4.4 20,21.25 14.4,18.1" fill="#ececec" stroke="#7f7f7f" stroke-width="0.9" stroke-linejoin="round"/><rect x="10.600" y="0.600" width="3.800" height="17.500" fill="#8f8f8f" stroke="#6f6f6f" stroke-width=".6"/><path d="M12.500 0.600v17.500" stroke="#c4c4c4" stroke-width=".8"/><path d="M4.750 20.600L10.600 17.500M14.400 18.100L20 21.250" fill="none" stroke="#5f5f5f" stroke-width="1.2"/></svg>
<svg class="ic" style="left:566px;top:155px" width="24" height="24"><defs><linearGradient id="gg47" x1="0" y1="0" x2="1" y2="1"><stop offset="0" stop-color="#ececec"/><stop offset="1" stop-color="#b9b9b9"/></linearGradient></defs><defs><filter id="sh48" x="-30%" y="-30%" width="160%" height="160%"><feGaussianBlur stdDeviation="1"/></filter></defs><path d="M1 7L8 1.500H18L24 7V18L18 23H3L1 18z" transform="translate(0.8,1.2)" fill="#000" opacity="0.18" filter="url(#sh48)"/><polygon points="1.5,7 8,2 18,2 13,7" fill="#e9e9e9" stroke="#9c9c9c" stroke-width="0.6" stroke-linejoin="round"/><polygon points="13,7 18,2 23.5,8 18.5,12.5" fill="#d6d6d6" stroke="#9c9c9c" stroke-width="0.6" stroke-linejoin="round"/><polygon points="1.5,7 13,7 18.5,12.5 18.5,22.5 3,22.5 1.5,19" fill="url(#gg47)" stroke="#9c9c9c" stroke-width="0.6" stroke-linejoin="round"/><polygon points="18.5,12.5 23.5,8 23.5,17.5 18.5,22.5" fill="#b4b4b4" stroke="#9c9c9c" stroke-width="0.6" stroke-linejoin="round"/></svg>
<svg class="ic" style="left:597px;top:155px" width="24" height="24"><defs><linearGradient id="gg49" x1="0" y1="0" x2="1" y2="1"><stop offset="0" stop-color="#ececec"/><stop offset="1" stop-color="#b9b9b9"/></linearGradient></defs><defs><filter id="sh50" x="-30%" y="-30%" width="160%" height="160%"><feGaussianBlur stdDeviation="1"/></filter></defs><path d="M1 7L8 1.500C17 1 24 6 24 12V18L18 23H3L1 18z" transform="translate(0.8,1.2)" fill="#000" opacity="0.18" filter="url(#sh50)"/><path d="M1.500 7L8 2C17 2 23.500 6.500 23.500 12.500L18.500 17C18.500 11 13 7 1.500 7z" fill="#e4e4e4" stroke="#9c9c9c" stroke-width="0.6"/><path d="M1.500 7C13 7 18.500 11 18.500 17V22.500H3L1.500 19z" fill="url(#gg49)" stroke="#9c9c9c" stroke-width="0.6"/><path d="M18.500 17L23.500 12.500V17.500L18.500 22.500z" fill="#b4b4b4" stroke="#9c9c9c" stroke-width="0.6"/></svg>
<svg class="ic" style="left:628px;top:155px" width="24" height="24"><polygon points="1.5,5 8,1.5 23.5,1.5 23.5,17 17.5,22" fill="none"/><path d="M1.500 5.500V22H17.500M1.500 22L9 14.500M9 14.500V5" fill="none" stroke="#8f8f8f" stroke-width="0.9" stroke-dasharray="1.600 1.400"/><polygon points="1.5,5.5 8,1.5 23.5,1.5 17.5,5.5" fill="#eaeaea" stroke="#9c9c9c" stroke-width="0.6" stroke-linejoin="round"/><path d="M17.500 5.500L23.500 1.500V17L17.500 22z" fill="#b9b9b9" stroke="#9c9c9c" stroke-width="0.6"/><path d="M9 5.500C15 7 17.500 10.500 17.500 17.500V5.500z" fill="#8f8f8f"/><path d="M17.500 21.500h6l-3 3z" fill="#8a8a8a"/></svg>
<div style="left:658px;top:155px;width:1px;height:24px;background:#cdcdcd;"></div>
<svg class="ic" style="left:665px;top:155px" width="24" height="24"><g opacity="0.9"><defs><filter id="sh51" x="-30%" y="-30%" width="160%" height="160%"><feGaussianBlur stdDeviation="1"/></filter></defs><path d="M1 5L5 2H23V18L19 22H1z" transform="translate(0.8,1.2)" fill="#000" opacity="0.18" filter="url(#sh51)"/><polygon points="1,5 5,2 22,2 18,5" fill="#f4f4f4" stroke="#c4c4c4" stroke-width="0.6" stroke-linejoin="round"/><polygon points="1,5 18,5 18,22 1,22" fill="#e4e4e4" stroke="#c4c4c4" stroke-width="0.6" stroke-linejoin="round"/><polygon points="18,5 22,2 22,18.5 18,22" fill="#d2d2d2" stroke="#c4c4c4" stroke-width="0.6" stroke-linejoin="round"/></g><rect x="10" y="6.500" width="12.500" height="13.500" fill="#ededed" stroke="#d0d0d0" stroke-width=".7" opacity=".9"/></svg>
<svg class="ic" style="left:695px;top:155px" width="24" height="24"><g opacity="0.9"><defs><filter id="sh52" x="-30%" y="-30%" width="160%" height="160%"><feGaussianBlur stdDeviation="1"/></filter></defs><path d="M1 5L5 2H23V18L19 22H1z" transform="translate(0.8,1.2)" fill="#000" opacity="0.18" filter="url(#sh52)"/><polygon points="1,5 5,2 18,2 14,5" fill="#f4f4f4" stroke="#c4c4c4" stroke-width="0.6" stroke-linejoin="round"/><polygon points="1,5 14,5 14,22 1,22" fill="#e4e4e4" stroke="#c4c4c4" stroke-width="0.6" stroke-linejoin="round"/><polygon points="14,5 18,2 18,18.5 14,22" fill="#d2d2d2" stroke="#c4c4c4" stroke-width="0.6" stroke-linejoin="round"/></g><path d="M8 5V22" fill="none" stroke="#c9c9c9" stroke-width="0.8"/></svg>
<svg class="ic" style="left:727px;top:155px" width="24" height="24"><defs><linearGradient id="gg53" x1="0" y1="0" x2="1" y2="1"><stop offset="0" stop-color="#ececec"/><stop offset="1" stop-color="#b9b9b9"/></linearGradient></defs><defs><filter id="sh54" x="-30%" y="-30%" width="160%" height="160%"><feGaussianBlur stdDeviation="1"/></filter></defs><path d="M1 5L5 1.500H22.500V18L18.500 22.500H1z" transform="translate(0.8,1.2)" fill="#000" opacity="0.18" filter="url(#sh54)"/><polygon points="1,5 5,1.5 22.5,1.5 18.5,5" fill="#e0e0e0" stroke="#9c9c9c" stroke-width="0.5" stroke-linejoin="round"/><polygon points="1,5 18.5,5 18.5,22.5 1,22.5" fill="url(#gg53)" stroke="#9c9c9c" stroke-width="0.5" stroke-linejoin="round"/><polygon points="18.5,5 22.5,1.5 22.5,18.5 18.5,22.5" fill="#a9a9a9" stroke="#9c9c9c" stroke-width="0.5" stroke-linejoin="round"/></svg>
<svg class="ic" style="left:759px;top:155px" width="24" height="24"><polygon points="1.5,3 13,1.5 19.5,7 8,9.5" fill="#cfcfcf" stroke="#8a8a8a" stroke-width="0.8" stroke-linejoin="round"/><polygon points="1.5,3 8,9.5 9.5,22.5 2.5,14" fill="#e9e9e9" stroke="#8a8a8a" stroke-width="0.8" stroke-linejoin="round"/><polygon points="8,9.5 19.5,7 19.5,18 9.5,22.5" fill="#f4f4f4" stroke="#8a8a8a" stroke-width="0.8" stroke-linejoin="round"/><polygon points="9.5,22.5 19.5,12.5 19.5,18" fill="#7f7f7f"/><path d="M17.500 21.500h6l-3 3z" fill="#8a8a8a"/></svg>
<svg class="ic" style="left:789px;top:155px" width="24" height="24"><defs><linearGradient id="gg55" x1="0" y1="0" x2="1" y2="1"><stop offset="0" stop-color="#ececec"/><stop offset="1" stop-color="#b9b9b9"/></linearGradient></defs><defs><filter id="sh56" x="-30%" y="-30%" width="160%" height="160%"><feGaussianBlur stdDeviation="1"/></filter></defs><path d="M1 5L5 1.500H23V18L19 22.500H1z" transform="translate(0.8,1.2)" fill="#000" opacity="0.18" filter="url(#sh56)"/><polygon points="1,5 5.5,1.5 23,1.5 18,5" fill="#e4e4e4" stroke="#9c9c9c" stroke-width="0.5" stroke-linejoin="round"/><polygon points="1,5 18,5 18,22 1,22" fill="url(#gg55)" stroke="#9c9c9c" stroke-width="0.5" stroke-linejoin="round"/><polygon points="18,5 23,1.5 23,17.5 18,22" fill="#b4b4b4" stroke="#9c9c9c" stroke-width="0.5" stroke-linejoin="round"/><path d="M17.500 21.500h6l-3 3z" fill="#8a8a8a"/></svg>
<svg class="ic" style="left:822px;top:155px" width="24" height="24"><rect x="1.500" y="1.500" width="18" height="18" fill="#ededed" stroke="#8a8a8a" stroke-width="1.300"/><rect x="11" y="4" width="5.500" height="5.500" fill="#fafafa" stroke="#8a8a8a" stroke-width="1.100"/></svg>
<svg class="ic" style="left:12px;top:184px" width="3" height="33"><rect x="0" y="4" width="2" height="2" fill="#d2d2d2"/><rect x="1" y="4" width="1" height="1" fill="#b4b4b4"/><rect x="0" y="6" width="1" height="1" fill="#ffffff"/><rect x="0" y="8" width="2" height="2" fill="#d2d2d2"/><rect x="1" y="8" width="1" height="1" fill="#b4b4b4"/><rect x="0" y="10" width="1" height="1" fill="#ffffff"/><rect x="0" y="12" width="2" height="2" fill="#d2d2d2"/><rect x="1" y="12" width="1" height="1" fill="#b4b4b4"/><rect x="0" y="14" width="1" height="1" fill="#ffffff"/><rect x="0" y="16" width="2" height="2" fill="#d2d2d2"/><rect x="1" y="16" width="1" height="1" fill="#b4b4b4"/><rect x="0" y="18" width="1" height="1" fill="#ffffff"/><rect x="0" y="20" width="2" height="2" fill="#d2d2d2"/><rect x="1" y="20" width="1" height="1" fill="#b4b4b4"/><rect x="0" y="22" width="1" height="1" fill="#ffffff"/><rect x="0" y="24" width="2" height="2" fill="#d2d2d2"/><rect x="1" y="24" width="1" height="1" fill="#b4b4b4"/><rect x="0" y="26" width="1" height="1" fill="#ffffff"/><rect x="0" y="28" width="2" height="2" fill="#d2d2d2"/><rect x="1" y="28" width="1" height="1" fill="#b4b4b4"/><rect x="0" y="30" width="1" height="1" fill="#ffffff"/></svg>
<svg class="ic" style="left:20px;top:189px" width="24" height="24"><g transform="translate(2.500,0) scale(.88)"><path d="M0.800 1.800L15 0.600L22.300 1.800V20.600L7.800 23.600L0.800 20.600z" transform="translate(1,1.4)" fill="#000" opacity="0.3" filter="url(#sh17)"/><polygon points="0.8,1.8 7.8,4.4 7.8,23.6 0.8,20.6" fill="#ead566" stroke="#6b6432" stroke-width="0.7" stroke-linejoin="round"/><polygon points="7.8,4.4 22.3,1.8 22.3,20.6 7.8,23.6" fill="#fbe77a" stroke="#6b6432" stroke-width="0.7" stroke-linejoin="round"/><polygon points="0.8,1.8 15,0.6 22.3,1.8 7.8,4.4" fill="#fff3a1" stroke="#6b6432" stroke-width="0.7" stroke-linejoin="round"/><path d="M0.800 1.800L7.800 23.600M7.800 4.400L0.800 20.600M7.800 4.400L22.300 20.600M22.300 1.800L7.800 23.600M0.800 11.200L7.800 14L22.300 11.200M4.300 3V22.100M15 3V22.100M7.800 4.400L22.300 11.200M7.800 14L15 3M15 0.600L7.800 4.400M4.300 1.500L15 3" fill="none" stroke="#4b4726" stroke-width="0.6"/></g><path d="M0.500 15L8 19L0.500 23z" fill="#d30f14"/></svg>
<div style="left:51px;top:184px;width:1px;height:33px;background:#b9b9b9;"></div>
<div style="left:52px;top:184px;width:1px;height:33px;background:#fbfbfb;"></div>
<svg class="ic" style="left:55px;top:184px" width="3" height="33"><rect x="0" y="4" width="2" height="2" fill="#d2d2d2"/><rect x="1" y="4" width="1" height="1" fill="#b4b4b4"/><rect x="0" y="6" width="1" height="1" fill="#ffffff"/><rect x="0" y="8" width="2" height="2" fill="#d2d2d2"/><rect x="1" y="8" width="1" height="1" fill="#b4b4b4"/><rect x="0" y="10" width="1" height="1" fill="#ffffff"/><rect x="0" y="12" width="2" height="2" fill="#d2d2d2"/><rect x="1" y="12" width="1" height="1" fill="#b4b4b4"/><rect x="0" y="14" width="1" height="1" fill="#ffffff"/><rect x="0" y="16" width="2" height="2" fill="#d2d2d2"/><rect x="1" y="16" width="1" height="1" fill="#b4b4b4"/><rect x="0" y="18" width="1" height="1" fill="#ffffff"/><rect x="0" y="20" width="2" height="2" fill="#d2d2d2"/><rect x="1" y="20" width="1" height="1" fill="#b4b4b4"/><rect x="0" y="22" width="1" height="1" fill="#ffffff"/><rect x="0" y="24" width="2" height="2" fill="#d2d2d2"/><rect x="1" y="24" width="1" height="1" fill="#b4b4b4"/><rect x="0" y="26" width="1" height="1" fill="#ffffff"/><rect x="0" y="28" width="2" height="2" fill="#d2d2d2"/><rect x="1" y="28" width="1" height="1" fill="#b4b4b4"/><rect x="0" y="30" width="1" height="1" fill="#ffffff"/></svg>
<div style="left:61px;top:191px;width:200px;height:21px;border:1px solid #707070;border-radius:3px;background:linear-gradient(#f4f4f4 0%,#ececec 48%,#dedede 52%,#d0d0d0 100%);box-shadow:inset 0 0 0 1px rgba(255,255,255,.7);"></div>
<span class="tx" style="left:65px;top:193px;font-size:12px;line-height:16px;color:#000;letter-spacing:-0.141px;">view setting</span>
<svg class="ic" style="left:247px;top:199px" width="8" height="5"><path d="M0 0h7.500l-3.750 4.500z" fill="#000"/></svg>
<svg class="ic" style="left:264px;top:189px" width="24" height="24"><rect x="2.200" y="1" width="2.600" height="23" rx="1.200" fill="#17aaa3"/><rect x="3.900" y="1" width="1" height="23" fill="#0c837d"/><rect x="0.300" y="11" width="6.400" height="3.800" rx=".8" fill="#8f8f8f" stroke="#5f5f5f" stroke-width=".7"/><rect x="1.300" y="11.700" width="4.400" height="1" fill="#d9d9d9"/><rect x="10.200" y="1" width="2.600" height="23" rx="1.200" fill="#17aaa3"/><rect x="11.900" y="1" width="1" height="23" fill="#0c837d"/><rect x="8.300" y="16" width="6.400" height="3.800" rx=".8" fill="#8f8f8f" stroke="#5f5f5f" stroke-width=".7"/><rect x="9.300" y="16.700" width="4.400" height="1" fill="#d9d9d9"/><rect x="18.200" y="1" width="2.600" height="23" rx="1.200" fill="#17aaa3"/><rect x="19.900" y="1" width="1" height="23" fill="#0c837d"/><rect x="16.300" y="7" width="6.400" height="3.800" rx=".8" fill="#8f8f8f" stroke="#5f5f5f" stroke-width=".7"/><rect x="17.300" y="7.700" width="4.400" height="1" fill="#d9d9d9"/></svg>
<svg class="ic" style="left:295px;top:189px" width="24" height="24"><rect x="2.200" y="1" width="2.600" height="23" rx="1.200" fill="#17aaa3"/><rect x="3.900" y="1" width="1" height="23" fill="#0c837d"/><rect x="0.300" y="11" width="6.400" height="3.800" rx=".8" fill="#8f8f8f" stroke="#5f5f5f" stroke-width=".7"/><rect x="1.300" y="11.700" width="4.400" height="1" fill="#d9d9d9"/><rect x="10.200" y="1" width="2.600" height="23" rx="1.200" fill="#17aaa3"/><rect x="11.900" y="1" width="1" height="23" fill="#0c837d"/><rect x="8.300" y="16" width="6.400" height="3.800" rx=".8" fill="#8f8f8f" stroke="#5f5f5f" stroke-width=".7"/><rect x="9.300" y="16.700" width="4.400" height="1" fill="#d9d9d9"/><rect x="18.200" y="1" width="2.600" height="23" rx="1.200" fill="#17aaa3"/><rect x="19.900" y="1" width="1" height="23" fill="#0c837d"/><rect x="16.300" y="7" width="6.400" height="3.800" rx=".8" fill="#8f8f8f" stroke="#5f5f5f" stroke-width=".7"/><rect x="17.300" y="7.700" width="4.400" height="1" fill="#d9d9d9"/><path d="M14.500 19L17.200 22.500L23.500 14.500" fill="none" stroke="#d30f14" stroke-width="2.4"/></svg>
<div style="left:324px;top:184px;width:1px;height:33px;background:#b9b9b9;"></div>
<div style="left:325px;top:184px;width:1px;height:33px;background:#fbfbfb;"></div>
<svg class="ic" style="left:329px;top:184px" width="3" height="33"><rect x="0" y="4" width="2" height="2" fill="#d2d2d2"/><rect x="1" y="4" width="1" height="1" fill="#b4b4b4"/><rect x="0" y="6" width="1" height="1" fill="#ffffff"/><rect x="0" y="8" width="2" height="2" fill="#d2d2d2"/><rect x="1" y="8" width="1" height="1" fill="#b4b4b4"/><rect x="0" y="10" width="1" height="1" fill="#ffffff"/><rect x="0" y="12" width="2" height="2" fill="#d2d2d2"/><rect x="1" y="12" width="1" height="1" fill="#b4b4b4"/><rect x="0" y="14" width="1" height="1" fill="#ffffff"/><rect x="0" y="16" width="2" height="2" fill="#d2d2d2"/><rect x="1" y="16" width="1" height="1" fill="#b4b4b4"/><rect x="0" y="18" width="1" height="1" fill="#ffffff"/><rect x="0" y="20" width="2" height="2" fill="#d2d2d2"/><rect x="1" y="20" width="1" height="1" fill="#b4b4b4"/><rect x="0" y="22" width="1" height="1" fill="#ffffff"/><rect x="0" y="24" width="2" height="2" fill="#d2d2d2"/><rect x="1" y="24" width="1" height="1" fill="#b4b4b4"/><rect x="0" y="26" width="1" height="1" fill="#ffffff"/><rect x="0" y="28" width="2" height="2" fill="#d2d2d2"/><rect x="1" y="28" width="1" height="1" fill="#b4b4b4"/><rect x="0" y="30" width="1" height="1" fill="#ffffff"/></svg>
<svg class="ic" style="left:338px;top:189px" width="24" height="24"><defs><linearGradient id="gg57" x1="0" y1="0" x2="1" y2="1"><stop offset="0" stop-color="#ececec"/><stop offset="1" stop-color="#b9b9b9"/></linearGradient></defs><defs><filter id="sh58" x="-30%" y="-30%" width="160%" height="160%"><feGaussianBlur stdDeviation="1"/></filter></defs><path d="M1 6C1 0 23 0 23 6V18C23 24 1 24 1 18z" transform="translate(0.8,1.2)" fill="#000" opacity="0.18" filter="url(#sh58)"/><path d="M1.500 6V18.500C1.500 23.500 23.500 23.500 23.500 18.500V6z" fill="url(#gg57)" stroke="#8a8a8a" stroke-width="0.9" stroke-dasharray="1.500 1.500"/><ellipse cx="12.500" cy="6" rx="11" ry="4.500" fill="#d9d9d9" stroke="#8a8a8a" stroke-width=".9" stroke-dasharray="1.500 1.500"/></svg>
<div style="left:369px;top:189px;width:1px;height:24px;background:#cdcdcd;"></div>
<svg class="ic" style="left:375px;top:189px" width="24" height="24"><defs><filter id="sh59" x="-30%" y="-30%" width="160%" height="160%"><feGaussianBlur stdDeviation="1"/></filter></defs><path d="M1 5L8 1.500H23V16L17 22.500H3z" transform="translate(0.8,1.2)" fill="#000" opacity="0.18" filter="url(#sh59)"/><polygon points="1.5,5 8,1.5 23,1.5 17.5,5" fill="#f1f1f1" stroke="#9c9c9c" stroke-width="0.5" stroke-linejoin="round"/><polygon points="1.5,5 17.5,5 17.5,22.5 4,21" fill="#e6e6e6" stroke="#9c9c9c" stroke-width="0.5" stroke-linejoin="round"/><polygon points="17.5,5 23,1.5 22.5,16 17.5,22.5" fill="#d2d2d2" stroke="#9c9c9c" stroke-width="0.5" stroke-linejoin="round"/><g transform="rotate(-48 12 13)"><rect x="0" y="11" width="23" height="4" rx="1.500" fill="#f4f4f4" stroke="#8f8f8f" stroke-width=".7"/><path d="M0.500 11.500L-3.500 13L0.500 14.500z" fill="#c9c9c9" stroke="#8f8f8f" stroke-width=".5"/><path d="M19 11v4" stroke="#a9a9a9" stroke-width=".8"/></g></svg>
<svg class="ic" style="left:406px;top:189px" width="24" height="24"><defs><filter id="sh60" x="-30%" y="-30%" width="160%" height="160%"><feGaussianBlur stdDeviation="1"/></filter></defs><path d="M1 5L8 1.500H23V16L17 22.500H3z" transform="translate(0.8,1.2)" fill="#000" opacity="0.18" filter="url(#sh60)"/><polygon points="1.5,5 8,1.5 23,1.5 17.5,5" fill="#d9d9d9" stroke="#9c9c9c" stroke-width="0.5" stroke-linejoin="round"/><polygon points="1.5,5 17.5,5 17.5,22.5 4,21" fill="#c4c4c4" stroke="#9c9c9c" stroke-width="0.5" stroke-linejoin="round"/><polygon points="17.5,5 23,1.5 22.5,16 17.5,22.5" fill="#a9a9a9" stroke="#9c9c9c" stroke-width="0.5" stroke-linejoin="round"/><g transform="rotate(-48 12 13)"><rect x="0" y="11" width="23" height="4" rx="1.500" fill="#f4f4f4" stroke="#8f8f8f" stroke-width=".7"/><path d="M0.500 11.500L-3.500 13L0.500 14.500z" fill="#c9c9c9" stroke="#8f8f8f" stroke-width=".5"/><path d="M19 11v4" stroke="#a9a9a9" stroke-width=".8"/></g></svg>
<svg class="ic" style="left:437px;top:189px" width="24" height="24"><defs><filter id="sh61" x="-30%" y="-30%" width="160%" height="160%"><feGaussianBlur stdDeviation="1"/></filter></defs><path d="M1 5L8 1.500H23V16L17 22.500H3z" transform="translate(0.8,1.2)" fill="#000" opacity="0.18" filter="url(#sh61)"/><polygon points="1.5,5 8,1.5 23,1.5 17.5,5" fill="#c9c9c9" stroke="#9c9c9c" stroke-width="0.5" stroke-linejoin="round"/><polygon points="1.5,5 17.5,5 17.5,22.5 4,21" fill="#b4b4b4" stroke="#9c9c9c" stroke-width="0.5" stroke-linejoin="round"/><polygon points="17.5,5 23,1.5 22.5,16 17.5,22.5" fill="#969696" stroke="#9c9c9c" stroke-width="0.5" stroke-linejoin="round"/><g transform="rotate(-48 12 13)"><rect x="0" y="11" width="23" height="4" rx="1.500" fill="#f4f4f4" stroke="#8f8f8f" stroke-width=".7"/><path d="M0.500 11.500L-3.500 13L0.500 14.500z" fill="#c9c9c9" stroke="#8f8f8f" stroke-width=".5"/><path d="M19 11v4" stroke="#a9a9a9" stroke-width=".8"/></g></svg>
<div style="left:467px;top:189px;width:1px;height:24px;background:#cdcdcd;"></div>
<svg class="ic" style="left:474px;top:189px" width="24" height="24"><defs><filter id="sh62" x="-30%" y="-30%" width="160%" height="160%"><feGaussianBlur stdDeviation="1"/></filter></defs><path d="M1 14L6 11H22L21 19L17 23H2z" transform="translate(0.8,1.2)" fill="#000" opacity="0.18" filter="url(#sh62)"/><polygon points="1,14 6,11 22,11 17,14" fill="#f4f4f4" stroke="#c9c9c9" stroke-width="0.5" stroke-linejoin="round"/><polygon points="1,14 17,14 17,23.5 2.5,22" fill="#e4e4e4" stroke="#c9c9c9" stroke-width="0.5" stroke-linejoin="round"/><polygon points="17,14 22,11 21,19 17,23.5" fill="#d2d2d2" stroke="#c9c9c9" stroke-width="0.5" stroke-linejoin="round"/><path d="M11.5 1V8.5" fill="none" stroke="#6c6c6c" stroke-width="1.6"/><path d="M8.9 7h5.2l-2.6 4.500z" fill="#6c6c6c"/></svg>
<svg class="ic" style="left:505px;top:189px" width="24" height="24"><path d="M0.500 21.500L6 18H23.500L19 21.500z" fill="#2c2c2c"/><defs><filter id="sh63" x="-30%" y="-30%" width="160%" height="160%"><feGaussianBlur stdDeviation="1"/></filter></defs><path d="M3 13L7 10H21V17L17 20H3z" transform="translate(0.8,1.2)" fill="#000" opacity="0.18" filter="url(#sh63)"/><polygon points="3,12.5 7,10 21.5,10 17.5,12.5" fill="#f4f4f4" stroke="#c9c9c9" stroke-width="0.5" stroke-linejoin="round"/><polygon points="3,12.5 17.5,12.5 17.5,20 3,20" fill="#e4e4e4" stroke="#c9c9c9" stroke-width="0.5" stroke-linejoin="round"/><polygon points="17.5,12.5 21.5,10 21.5,17.5 17.5,20" fill="#cfcfcf" stroke="#c9c9c9" stroke-width="0.5" stroke-linejoin="round"/></svg>
<svg class="ic" style="left:536px;top:189px" width="24" height="24"><polygon points="0.5,19.5 11,14 24,15.5 12.5,21.5" fill="#f6f6f6" stroke="#d9d9d9" stroke-width="0.6" stroke-linejoin="round"/><path d="M8 9V16" fill="none" stroke="#767676" stroke-width="2"/><path d="M5.4 14.5h5.2l-2.6 4.500z" fill="#767676"/><path d="M13.5 4V10" fill="none" stroke="#767676" stroke-width="2"/><path d="M10.900 8.500h5.200l-2.600 4.500z" fill="#767676"/><path d="M19.800 5V11" fill="none" stroke="#767676" stroke-width="2"/><path d="M17.200 9.500h5.200l-2.600 4.500z" fill="#767676"/></svg>
<svg class="ic" style="left:567px;top:189px" width="24" height="24"><defs><filter id="sh64" x="-30%" y="-30%" width="160%" height="160%"><feGaussianBlur stdDeviation="1"/></filter></defs><path d="M1.500 6L5 3.500H15V8H23V19L19.500 21.500H8.500V17H1.500z" transform="translate(0.8,1.2)" fill="#000" opacity="0.18" filter="url(#sh64)"/><polygon points="1.5,5.5 5,3.4 14.5,3.4 11,5.5" fill="#ececec" stroke="#bdbdbd" stroke-width="0.5" stroke-linejoin="round"/><polygon points="1.5,5.5 11,5.5 11,17 1.5,17" fill="#d6d6d6" stroke="#bdbdbd" stroke-width="0.5" stroke-linejoin="round"/><polygon points="11,5.5 14.5,3.4 14.5,14.9 11,17" fill="#c2c2c2" stroke="#bdbdbd" stroke-width="0.5" stroke-linejoin="round"/><polygon points="8.5,9.5 12,7.4 22.5,7.4 19,9.5" fill="#fbfbfb" stroke="#bdbdbd" stroke-width="0.5" stroke-linejoin="round"/><polygon points="8.5,9.5 19,9.5 19,21 8.5,21" fill="#f4f4f4" stroke="#bdbdbd" stroke-width="0.5" stroke-linejoin="round"/><polygon points="19,9.5 22.5,7.4 22.5,18.9 19,21" fill="#d9d9d9" stroke="#bdbdbd" stroke-width="0.5" stroke-linejoin="round"/></svg>
<div style="left:597px;top:189px;width:1px;height:24px;background:#cdcdcd;"></div>
<svg class="ic" style="left:604px;top:189px" width="24" height="24"><rect x="1" y="1.500" width="8.500" height="21.500" fill="#e9e9e9" stroke="#bdbdbd" stroke-width=".8"/><path d="M1 23h9" stroke="#8f8f8f" stroke-width="1.300"/><path d="M9.500 1.500v21.500" stroke="#9f9f9f" stroke-width="1"/><path d="M15.500 2a1.800 1.800 0 0 1 3.600 0V15.500a4.200 4.200 0 1 1 -3.600 0z" fill="#f6f6f6" stroke="#a4a4a4" stroke-width="0.9"/><circle cx="17.300" cy="19.300" r="2.500" fill="#8f8f8f"/><path d="M17.300 8v10" stroke="#8f8f8f" stroke-width="1.300"/></svg>
<svg class="ic" style="left:636px;top:189px" width="24" height="24"><rect x="1" y="1.500" width="8.500" height="21.500" fill="#e9e9e9" stroke="#bdbdbd" stroke-width=".8"/><path d="M1 23h9" stroke="#8f8f8f" stroke-width="1.300"/><path d="M9.500 1.500v21.500" stroke="#9f9f9f" stroke-width="1"/><path d="M17.500 3C21 9.500 23.500 13 23.500 17A6 6 0 0 1 11.500 17C11.500 13 14 9.500 17.500 3z" fill="#9a9a9a"/><path d="M14 17.500a3.500 3.500 0 0 0 2.500 3.300" fill="none" stroke="#d9d9d9" stroke-width="1.2"/></svg>
<svg class="ic" style="left:666px;top:189px" width="24" height="24"><defs><filter id="sh65" x="-30%" y="-30%" width="160%" height="160%"><feGaussianBlur stdDeviation="1"/></filter></defs><path d="M1 13L3 11H21L22 13L20 23H3z" transform="translate(0.8,1.2)" fill="#000" opacity="0.18" filter="url(#sh65)"/><polygon points="0.5,12.5 4,10.5 21,10.5 23,12.5" fill="#fafafa" stroke="#d0d0d0" stroke-width="0.5" stroke-linejoin="round"/><polygon points="0.5,12.5 14.5,13.5 14,23.5 2,21.5" fill="#ececec" stroke="#d0d0d0" stroke-width="0.5" stroke-linejoin="round"/><polygon points="14.5,13.5 23,12.5 21.5,20.5 14,23.5" fill="#dcdcdc" stroke="#d0d0d0" stroke-width="0.5" stroke-linejoin="round"/><path d="M11 16.800l1.600-1v5.400" stroke="#4a4a4a" stroke-width="1.300" fill="none"/><path d="M12 1C15.500 3.500 10 6 13 10.500C9 10 7.500 7.500 9 5C10 3.500 12 3 12 1z" fill="#7a7a7a"/></svg>
<svg class="ic" style="left:697px;top:189px" width="24" height="24"><defs><filter id="sh66" x="-30%" y="-30%" width="160%" height="160%"><feGaussianBlur stdDeviation="1"/></filter></defs><path d="M1 13L3 11H21L22 13L20 23H3z" transform="translate(0.8,1.2)" fill="#000" opacity="0.18" filter="url(#sh66)"/><polygon points="0.5,12.5 4,10.5 21,10.5 23,12.5" fill="#fafafa" stroke="#d0d0d0" stroke-width="0.5" stroke-linejoin="round"/><polygon points="0.5,12.5 14.5,13.5 14,23.5 2,21.5" fill="#ececec" stroke="#d0d0d0" stroke-width="0.5" stroke-linejoin="round"/><polygon points="14.5,13.5 23,12.5 21.5,20.5 14,23.5" fill="#dcdcdc" stroke="#d0d0d0" stroke-width="0.5" stroke-linejoin="round"/><path d="M11 16.800l1.600-1v5.400" stroke="#4a4a4a" stroke-width="1.300" fill="none"/><path d="M11.500 1C13.500 4.500 15 6 15 8A3.500 3.500 0 0 1 8 8C8 6 9.500 4.500 11.500 1z" fill="#8f8f8f"/></svg>
<svg class="ic" style="left:728px;top:189px" width="24" height="24"><defs><filter id="sh67" x="-30%" y="-30%" width="160%" height="160%"><feGaussianBlur stdDeviation="1"/></filter></defs><path d="M1 13L3 11H21L22 13L20 23H3z" transform="translate(0.8,1.2)" fill="#000" opacity="0.18" filter="url(#sh67)"/><polygon points="0.5,12.5 4,10.5 21,10.5 23,12.5" fill="#fafafa" stroke="#d0d0d0" stroke-width="0.5" stroke-linejoin="round"/><polygon points="0.5,12.5 14.5,13.5 14,23.5 2,21.5" fill="#ececec" stroke="#d0d0d0" stroke-width="0.5" stroke-linejoin="round"/><polygon points="14.5,13.5 23,12.5 21.5,20.5 14,23.5" fill="#dcdcdc" stroke="#d0d0d0" stroke-width="0.5" stroke-linejoin="round"/><circle cx="12" cy="7" r="6" fill="#fafafa" stroke="#6c6c6c" stroke-width="1"/><path d="M11.500 10.500L13.500 3" stroke="#6c6c6c" stroke-width="1.100"/><polygon opacity="0" points="1,16 6,13 22,13 17,16" fill="#f4f4f4" stroke="#c9c9c9" stroke-width="0.5" stroke-linejoin="round"/><polygon opacity="0" points="1,16 17,16 17,23.5 2.5,22" fill="#e4e4e4" stroke="#c9c9c9" stroke-width="0.5" stroke-linejoin="round"/><polygon opacity="0" points="17,16 22,13 21,19 17,23.5" fill="#d2d2d2" stroke="#c9c9c9" stroke-width="0.5" stroke-linejoin="round"/></svg>
<svg class="ic" style="left:758px;top:189px" width="24" height="24"><rect x="1" y="1" width="7" height="22" fill="#e4e4e4" stroke="#bdbdbd" stroke-width=".7"/><circle cx="14" cy="12" r="7.500" fill="#fdfdfd" stroke="#c9c9c9" stroke-width=".8"/><path d="M14 7.500V12.500H17.500" fill="none" stroke="#8f8f8f" stroke-width="1.2"/><path d="M6 3.500L9 6.500M22.500 3.500L19.500 6.500M6 20.500L9 17.500M22.500 20.500L19.500 17.500" fill="none" stroke="#7f7f7f" stroke-width="1.1"/><path d="M9.800 7.300L7.500 6.800L9.300 5zM18.700 7.300L21 6.800L19.200 5zM9.800 16.700L7.500 17.200L9.300 19zM18.700 16.700L21 17.200L19.200 19z" fill="#7f7f7f"/></svg>
<svg class="ic" style="left:790px;top:189px" width="24" height="24"><defs><filter id="sh68" x="-30%" y="-30%" width="160%" height="160%"><feGaussianBlur stdDeviation="1"/></filter></defs><path d="M1 13L3 11H21L22 13L20 23H3z" transform="translate(0.8,1.2)" fill="#000" opacity="0.18" filter="url(#sh68)"/><polygon points="0.5,12.5 4,10.5 21,10.5 23,12.5" fill="#fafafa" stroke="#d0d0d0" stroke-width="0.5" stroke-linejoin="round"/><polygon points="0.5,12.5 14.5,13.5 14,23.5 2,21.5" fill="#ececec" stroke="#d0d0d0" stroke-width="0.5" stroke-linejoin="round"/><polygon points="14.5,13.5 23,12.5 21.5,20.5 14,23.5" fill="#dcdcdc" stroke="#d0d0d0" stroke-width="0.5" stroke-linejoin="round"/><g transform="rotate(-40 13 6)" fill="none" stroke="#8a8a8a" stroke-width="1.700"><rect x="5.500" y="3.500" width="8" height="5" rx="2.500"/><rect x="11.500" y="3.500" width="8" height="5" rx="2.500"/></g></svg>
<svg class="ic" style="left:0;top:0" width="1280" height="961" shape-rendering="crispEdges"><polygon points="485.2,296.5 548.5,260.3 1182.9,626.6 1182.9,791.5 1119.7,827.7 485.2,461.4" fill="#c0c0c0"/><path d="M485.2,296.5L1119.7,662.8M501.1,287.4L1135.5,653.8M516.9,278.4L1151.3,644.7M532.6,269.3L1167.1,635.6M548.5,260.3L1182.9,626.6M485.2,296.5L548.5,260.3M501.1,305.7L564.3,269.4M517.0,314.8L580.2,278.6M532.8,324.0L596.0,287.7M548.7,333.1L611.9,296.9M564.6,342.3L627.8,306.1M580.4,351.4L643.6,315.2M596.3,360.6L659.5,324.4M612.1,369.8L675.3,333.5M628.0,378.9L691.2,342.7M643.9,388.1L707.1,351.8M659.7,397.2L722.9,361.0M675.6,406.4L738.8,370.2M691.4,415.6L754.6,379.3M707.3,424.7L770.5,388.5M723.2,433.9L786.4,397.6M739.0,443.0L802.2,406.8M754.9,452.2L818.1,415.9M770.7,461.3L833.9,425.1M786.6,470.5L849.8,434.3M802.5,479.7L865.7,443.4M818.3,488.8L881.5,452.6M834.2,498.0L897.4,461.7M850.1,507.1L913.3,470.9M865.9,516.3L929.1,480.1M881.8,525.5L945.0,489.2M897.6,534.6L960.8,498.4M913.5,543.8L976.7,507.5M929.4,552.9L992.6,516.7M945.2,562.1L1008.4,525.8M961.1,571.2L1024.3,535.0M976.9,580.4L1040.1,544.2M992.8,589.6L1056.0,553.3M1008.7,598.7L1071.9,562.5M1024.5,607.9L1087.7,571.6M1040.4,617.0L1103.6,580.8M1056.2,626.2L1119.4,589.9M1072.1,635.3L1135.3,599.1M1088.0,644.5L1151.2,608.3M1103.8,653.7L1167.0,617.4M1119.7,662.8L1182.9,626.6M485.2,310.2L1119.7,676.6M485.2,324.0L1119.7,690.3M485.2,337.7L1119.7,704.0M485.2,351.5L1119.7,717.8M485.2,365.2L1119.7,731.5M485.2,378.9L1119.7,745.3M485.2,392.7L1119.7,759.0M485.2,406.4L1119.7,772.7M485.2,420.2L1119.7,786.5M485.2,433.9L1119.7,800.2M485.2,447.6L1119.7,814.0M485.2,461.4L1119.7,827.7M485.2,296.5L485.2,461.4M501.1,305.7L501.1,470.5M517.0,314.8L517.0,479.7M532.8,324.0L532.8,488.9M548.7,333.1L548.7,498.0M564.6,342.3L564.6,507.2M580.4,351.4L580.4,516.3M596.3,360.6L596.3,525.5M612.1,369.8L612.1,534.6M628.0,378.9L628.0,543.8M643.9,388.1L643.9,553.0M659.7,397.2L659.7,562.1M675.6,406.4L675.6,571.3M691.4,415.6L691.4,580.4M707.3,424.7L707.3,589.6M723.2,433.9L723.2,598.8M739.0,443.0L739.0,607.9M754.9,452.2L754.9,617.1M770.7,461.3L770.7,626.2M786.6,470.5L786.6,635.4M802.5,479.7L802.5,644.5M818.3,488.8L818.3,653.7M834.2,498.0L834.2,662.9M850.1,507.1L850.1,672.0M865.9,516.3L865.9,681.2M881.8,525.5L881.8,690.3M897.6,534.6L897.6,699.5M913.5,543.8L913.5,708.6M929.4,552.9L929.4,717.8M945.2,562.1L945.2,727.0M961.1,571.2L961.1,736.1M976.9,580.4L976.9,745.3M992.8,589.6L992.8,754.4M1008.7,598.7L1008.7,763.6M1024.5,607.9L1024.5,772.8M1040.4,617.0L1040.4,781.9M1056.2,626.2L1056.2,791.1M1072.1,635.3L1072.1,800.2M1088.0,644.5L1088.0,809.4M1103.8,653.7L1103.8,818.5M1119.7,662.8L1119.7,827.7M1119.7,676.6L1182.9,640.3M1119.7,690.3L1182.9,654.1M1119.7,704.0L1182.9,667.8M1119.7,717.8L1182.9,681.5M1119.7,731.5L1182.9,695.3M1119.7,745.3L1182.9,709.0M1119.7,759.0L1182.9,722.8M1119.7,772.7L1182.9,736.5M1119.7,786.5L1182.9,750.2M1119.7,800.2L1182.9,764.0M1119.7,814.0L1182.9,777.7M1119.7,827.7L1182.9,791.5M1135.5,653.8L1135.5,818.6M1151.3,644.7L1151.3,809.6M1167.1,635.6L1167.1,800.5M1182.9,626.6L1182.9,791.5" fill="none" stroke="#000" stroke-width="1"/><path d="M1120.6,663.0h7.3 l0.9,1.3 l-2.5,4.6 h-2 l-3.4,-4.8zM1120.6,676.8h7.3 l0.9,1.3 l-2.5,4.6 h-2 l-3.4,-4.8zM1120.6,690.5h7.3 l0.9,1.3 l-2.5,4.6 h-2 l-3.4,-4.8zM1120.6,704.2h7.3 l0.9,1.3 l-2.5,4.6 h-2 l-3.4,-4.8zM1120.6,718.0h7.3 l0.9,1.3 l-2.5,4.6 h-2 l-3.4,-4.8zM1120.6,731.7h7.3 l0.9,1.3 l-2.5,4.6 h-2 l-3.4,-4.8zM1120.6,745.5h7.3 l0.9,1.3 l-2.5,4.6 h-2 l-3.4,-4.8zM1120.6,759.2h7.3 l0.9,1.3 l-2.5,4.6 h-2 l-3.4,-4.8zM1120.6,772.9h7.3 l0.9,1.3 l-2.5,4.6 h-2 l-3.4,-4.8zM1120.6,786.7h7.3 l0.9,1.3 l-2.5,4.6 h-2 l-3.4,-4.8zM1120.6,800.4h7.3 l0.9,1.3 l-2.5,4.6 h-2 l-3.4,-4.8zM1120.6,814.2h7.3 l0.9,1.3 l-2.5,4.6 h-2 l-3.4,-4.8zM1120.6,827.9h7.3 l0.9,1.3 l-2.5,4.6 h-2 l-3.4,-4.8zM1136.4,654.0h7.3 l0.9,1.3 l-2.5,4.6 h-2 l-3.4,-4.8zM1136.4,667.7h7.3 l0.9,1.3 l-2.5,4.6 h-2 l-3.4,-4.8zM1136.4,681.4h7.3 l0.9,1.3 l-2.5,4.6 h-2 l-3.4,-4.8zM1136.4,695.2h7.3 l0.9,1.3 l-2.5,4.6 h-2 l-3.4,-4.8zM1136.4,708.9h7.3 l0.9,1.3 l-2.5,4.6 h-2 l-3.4,-4.8zM1136.4,722.7h7.3 l0.9,1.3 l-2.5,4.6 h-2 l-3.4,-4.8zM1136.4,736.4h7.3 l0.9,1.3 l-2.5,4.6 h-2 l-3.4,-4.8zM1136.4,750.1h7.3 l0.9,1.3 l-2.5,4.6 h-2 l-3.4,-4.8zM1136.4,763.9h7.3 l0.9,1.3 l-2.5,4.6 h-2 l-3.4,-4.8zM1136.4,777.6h7.3 l0.9,1.3 l-2.5,4.6 h-2 l-3.4,-4.8zM1136.4,791.4h7.3 l0.9,1.3 l-2.5,4.6 h-2 l-3.4,-4.8zM1136.4,805.1h7.3 l0.9,1.3 l-2.5,4.6 h-2 l-3.4,-4.8zM1136.4,818.8h7.3 l0.9,1.3 l-2.5,4.6 h-2 l-3.4,-4.8zM1152.2,644.9h7.3 l0.9,1.3 l-2.5,4.6 h-2 l-3.4,-4.8zM1152.2,658.6h7.3 l0.9,1.3 l-2.5,4.6 h-2 l-3.4,-4.8zM1152.2,672.4h7.3 l0.9,1.3 l-2.5,4.6 h-2 l-3.4,-4.8zM1152.2,686.1h7.3 l0.9,1.3 l-2.5,4.6 h-2 l-3.4,-4.8zM1152.2,699.9h7.3 l0.9,1.3 l-2.5,4.6 h-2 l-3.4,-4.8zM1152.2,713.6h7.3 l0.9,1.3 l-2.5,4.6 h-2 l-3.4,-4.8zM1152.2,727.3h7.3 l0.9,1.3 l-2.5,4.6 h-2 l-3.4,-4.8zM1152.2,741.1h7.3 l0.9,1.3 l-2.5,4.6 h-2 l-3.4,-4.8zM1152.2,754.8h7.3 l0.9,1.3 l-2.5,4.6 h-2 l-3.4,-4.8zM1152.2,768.6h7.3 l0.9,1.3 l-2.5,4.6 h-2 l-3.4,-4.8zM1152.2,782.3h7.3 l0.9,1.3 l-2.5,4.6 h-2 l-3.4,-4.8zM1152.2,796.0h7.3 l0.9,1.3 l-2.5,4.6 h-2 l-3.4,-4.8zM1152.2,809.8h7.3 l0.9,1.3 l-2.5,4.6 h-2 l-3.4,-4.8zM1168.0,635.8h7.3 l0.9,1.3 l-2.5,4.6 h-2 l-3.4,-4.8zM1168.0,649.6h7.3 l0.9,1.3 l-2.5,4.6 h-2 l-3.4,-4.8zM1168.0,663.3h7.3 l0.9,1.3 l-2.5,4.6 h-2 l-3.4,-4.8zM1168.0,677.1h7.3 l0.9,1.3 l-2.5,4.6 h-2 l-3.4,-4.8zM1168.0,690.8h7.3 l0.9,1.3 l-2.5,4.6 h-2 l-3.4,-4.8zM1168.0,704.5h7.3 l0.9,1.3 l-2.5,4.6 h-2 l-3.4,-4.8zM1168.0,718.3h7.3 l0.9,1.3 l-2.5,4.6 h-2 l-3.4,-4.8zM1168.0,732.0h7.3 l0.9,1.3 l-2.5,4.6 h-2 l-3.4,-4.8zM1168.0,745.8h7.3 l0.9,1.3 l-2.5,4.6 h-2 l-3.4,-4.8zM1168.0,759.5h7.3 l0.9,1.3 l-2.5,4.6 h-2 l-3.4,-4.8zM1168.0,773.2h7.3 l0.9,1.3 l-2.5,4.6 h-2 l-3.4,-4.8zM1168.0,787.0h7.3 l0.9,1.3 l-2.5,4.6 h-2 l-3.4,-4.8zM1168.0,800.7h7.3 l0.9,1.3 l-2.5,4.6 h-2 l-3.4,-4.8zM1183.8,626.8h7.3 l0.9,1.3 l-2.5,4.6 h-2 l-3.4,-4.8zM1183.8,640.5h7.3 l0.9,1.3 l-2.5,4.6 h-2 l-3.4,-4.8zM1183.8,654.3h7.3 l0.9,1.3 l-2.5,4.6 h-2 l-3.4,-4.8zM1183.8,668.0h7.3 l0.9,1.3 l-2.5,4.6 h-2 l-3.4,-4.8zM1183.8,681.7h7.3 l0.9,1.3 l-2.5,4.6 h-2 l-3.4,-4.8zM1183.8,695.5h7.3 l0.9,1.3 l-2.5,4.6 h-2 l-3.4,-4.8zM1183.8,709.2h7.3 l0.9,1.3 l-2.5,4.6 h-2 l-3.4,-4.8zM1183.8,723.0h7.3 l0.9,1.3 l-2.5,4.6 h-2 l-3.4,-4.8zM1183.8,736.7h7.3 l0.9,1.3 l-2.5,4.6 h-2 l-3.4,-4.8zM1183.8,750.4h7.3 l0.9,1.3 l-2.5,4.6 h-2 l-3.4,-4.8zM1183.8,764.2h7.3 l0.9,1.3 l-2.5,4.6 h-2 l-3.4,-4.8zM1183.8,777.9h7.3 l0.9,1.3 l-2.5,4.6 h-2 l-3.4,-4.8zM1183.8,791.7h7.3 l0.9,1.3 l-2.5,4.6 h-2 l-3.4,-4.8z" fill="#8b0000"/><path d="M1128.7,664.6 l-2.3,4.2M1128.7,678.4 l-2.3,4.2M1128.7,692.1 l-2.3,4.2M1128.7,705.8 l-2.3,4.2M1128.7,719.6 l-2.3,4.2M1128.7,733.3 l-2.3,4.2M1128.7,747.1 l-2.3,4.2M1128.7,760.8 l-2.3,4.2M1128.7,774.5 l-2.3,4.2M1128.7,788.3 l-2.3,4.2M1128.7,802.0 l-2.3,4.2M1128.7,815.8 l-2.3,4.2M1128.7,829.5 l-2.3,4.2M1144.5,655.6 l-2.3,4.2M1144.5,669.3 l-2.3,4.2M1144.5,683.0 l-2.3,4.2M1144.5,696.8 l-2.3,4.2M1144.5,710.5 l-2.3,4.2M1144.5,724.3 l-2.3,4.2M1144.5,738.0 l-2.3,4.2M1144.5,751.7 l-2.3,4.2M1144.5,765.5 l-2.3,4.2M1144.5,779.2 l-2.3,4.2M1144.5,793.0 l-2.3,4.2M1144.5,806.7 l-2.3,4.2M1144.5,820.4 l-2.3,4.2M1160.3,646.5 l-2.3,4.2M1160.3,660.2 l-2.3,4.2M1160.3,674.0 l-2.3,4.2M1160.3,687.7 l-2.3,4.2M1160.3,701.5 l-2.3,4.2M1160.3,715.2 l-2.3,4.2M1160.3,728.9 l-2.3,4.2M1160.3,742.7 l-2.3,4.2M1160.3,756.4 l-2.3,4.2M1160.3,770.2 l-2.3,4.2M1160.3,783.9 l-2.3,4.2M1160.3,797.6 l-2.3,4.2M1160.3,811.4 l-2.3,4.2M1176.1,637.4 l-2.3,4.2M1176.1,651.2 l-2.3,4.2M1176.1,664.9 l-2.3,4.2M1176.1,678.7 l-2.3,4.2M1176.1,692.4 l-2.3,4.2M1176.1,706.1 l-2.3,4.2M1176.1,719.9 l-2.3,4.2M1176.1,733.6 l-2.3,4.2M1176.1,747.4 l-2.3,4.2M1176.1,761.1 l-2.3,4.2M1176.1,774.8 l-2.3,4.2M1176.1,788.6 l-2.3,4.2M1176.1,802.3 l-2.3,4.2M1191.9,628.4 l-2.3,4.2M1191.9,642.1 l-2.3,4.2M1191.9,655.9 l-2.3,4.2M1191.9,669.6 l-2.3,4.2M1191.9,683.3 l-2.3,4.2M1191.9,697.1 l-2.3,4.2M1191.9,710.8 l-2.3,4.2M1191.9,724.6 l-2.3,4.2M1191.9,738.3 l-2.3,4.2M1191.9,752.0 l-2.3,4.2M1191.9,765.8 l-2.3,4.2M1191.9,779.5 l-2.3,4.2M1191.9,793.3 l-2.3,4.2" stroke="#ff1a1a" stroke-width=".9" fill="none" stroke-dasharray="1 1"/><path d="M1150.200,727 h-5 v7 h0.800 l4.200,-5z" fill="#8b0000"/><path d="M580.7,516.8 l3,5.500 v3 h-6.500 v-3z" fill="#ff0000"/><path d="M961.6,571.2v-57M977.4,562.2v-57M993.2,553.1v-57M1009.0,544.1v-57M1024.8,535.0v-57M961.6,514.2L1024.8,478.0" fill="none" stroke="#0000ff" stroke-width="1"/><path d="M961.6,569.2 l-2.600,-11 h5.200zM977.4,560.2 l-2.600,-11 h5.200zM993.2,551.1 l-2.600,-11 h5.200zM1009.0,542.1 l-2.600,-11 h5.200zM1024.8,533.0 l-2.600,-11 h5.200z" fill="#0000c8"/></svg>
<div style="left:8px;top:219px;width:249px;height:23px;background:#f0f0f0;border-right:1px solid #a3a3a3;border-bottom:1px solid #a3a3a3;"></div>
<svg class="jp" style="left:9px;top:223.2px" width="33" height="15"><text x="0" y="12" fill="#000" textLength="32" lengthAdjust="spacingAndGlyphs">メッシュ</text></svg>
<svg class="ic" style="left:219px;top:224px" width="16" height="16"><path d="M1.300 1.600H10.200L6.900 5.600V10H4.600V5.600z" fill="#cfcfda" stroke="#9c9ca8" stroke-width=".9" stroke-linejoin="round"/><path d="M2.400 2.100H9.100L8.500 2.900H3z" fill="#ffffff" opacity=".8"/><path d="M5.400 5.600V9.600" stroke="#e9e9f2" stroke-width=".8"/><path d="M7.800 10h5.400l-2.700 3.200z" fill="#000"/></svg>
<svg class="ic" style="left:241px;top:224px" width="12" height="12"><g shape-rendering="crispEdges"><path d="M3 1h6v6h-6zM4 3v3h4v-3z" fill="#000" fill-rule="evenodd"/><path d="M1 4h6v6h-6z" fill="#fff"/><path d="M1 4h6v6h-6zM2 6v3h4v-3z" fill="#000" fill-rule="evenodd"/></g></svg>
<div style="left:8px;top:242px;width:249px;height:24px;background:linear-gradient(#e8f0fc 0%,#e2eafa 6%,#cbd9f1 50%,#cbd9f1 100%);"></div>
<svg class="ic" style="left:10px;top:246px" width="16" height="16"><polygon points="0.5,1.4 5.5,3.3 5.5,15.7 0.5,13.6" fill="#7ccc88" stroke="#4f6b54" stroke-width="0.7" stroke-linejoin="round"/><polygon points="5.5,3.3 15.5,1.4 15.5,13.6 5.5,15.7" fill="#8fd99a" stroke="#4f6b54" stroke-width="0.7" stroke-linejoin="round"/><polygon points="0.5,1.4 10.5,0.5 15.5,1.4 5.5,3.3" fill="#a9e6ae" stroke="#4f6b54" stroke-width="0.7" stroke-linejoin="round"/><path d="M0.500 1.400L5.500 15.700M5.500 3.300L0.500 13.600M5.500 3.300L15.500 13.600M15.500 1.400L5.500 15.700M0.500 7.500L5.500 9.500L15.500 7.500M3 2.300V14.700M10.500 2.400V14.700M5.500 9.500L10.500 2.400M3 0.900L10.500 2.400M10.500 0.500L5.500 3.300" stroke="#3a5541" stroke-width=".6" fill="none"/></svg>
<svg class="jp" style="left:32px;top:246.2px" width="33" height="15"><text x="0" y="12" fill="#000" textLength="32" lengthAdjust="spacingAndGlyphs">メッシュ</text></svg>
<svg class="ic" style="left:236px;top:246px" width="9" height="15"><defs><linearGradient id="ar1" x1="0" y1="0" x2="1" y2="0"><stop offset="0" stop-color="#2379de"/><stop offset=".38" stop-color="#62b3f4"/><stop offset="1" stop-color="#3a92ea"/></linearGradient></defs><path d="M1 1L8 7.500L1 14z" fill="url(#ar1)" stroke="#1f74da" stroke-width=".9" stroke-linejoin="round"/></svg>
<div style="left:8px;top:266px;width:249px;height:24px;background:linear-gradient(#e8f0fc 0%,#e2eafa 6%,#cbd9f1 50%,#cbd9f1 100%);"></div>
<svg class="ic" style="left:10px;top:270px" width="16" height="16"><circle cx="5.300" cy="9.600" r="4.100" fill="none" stroke="#14a39d" stroke-width="2.400"/><path d="M5.300 4.300V6.600L11.200 5.300V2.800l-1.400.4v.9z" fill="#14a39d"/><path d="M11 8h4.800v1.500h-3.100v1.200h2.700v1.400h-2.700v1.300h3.200V15H11z" fill="#14a39d"/></svg>
<svg class="jp" style="left:32px;top:270.2px" width="49" height="15"><text x="0" y="12" fill="#000" textLength="48" lengthAdjust="spacingAndGlyphs">材料特性</text></svg>
<svg class="ic" style="left:236px;top:270px" width="9" height="15"><path d="M1 1L8 7.500L1 14z" fill="url(#ar1)" stroke="#1f74da" stroke-width=".9" stroke-linejoin="round"/></svg>
<div style="left:8px;top:290px;width:249px;height:24px;background:linear-gradient(#e8f0fc 0%,#e2eafa 6%,#cbd9f1 50%,#cbd9f1 100%);"></div>
<svg class="ic" style="left:10px;top:294px" width="16" height="16"><polygon points="0.5,2.5 5,4 5,15.5 0.5,13.5" fill="#f2cf2e"/><polygon points="5,4 15.5,2.5 15.5,13.5 5,15.5" fill="#ffe138"/><polygon points="0.5,2.5 11,0.8 15.5,2.5 5,4" fill="#ffe94d"/><path d="M6 9.500h8M6 9.500l2.200-2v4zM14.800 9.500l-2.200-2v4z" stroke="#e2261c" stroke-width="1.5" fill="#e2261c" stroke-linejoin="round"/><path d="M2.700 5.500v7.500M8 1.600l4 1.200" stroke="#e2261c" stroke-width="1.3" stroke-dasharray="2 3"/></svg>
<svg class="jp" style="left:32px;top:294.2px" width="49" height="15"><text x="0" y="12" fill="#000" textLength="48" lengthAdjust="spacingAndGlyphs">要素特性</text></svg>
<svg class="ic" style="left:236px;top:294px" width="9" height="15"><path d="M1 1L8 7.500L1 14z" fill="url(#ar1)" stroke="#1f74da" stroke-width=".9" stroke-linejoin="round"/></svg>
<div style="left:8px;top:314px;width:249px;height:24px;background:linear-gradient(#e8f0fc 0%,#e2eafa 6%,#cbd9f1 50%,#cbd9f1 100%);"></div>
<svg class="ic" style="left:10px;top:318px" width="16" height="16"><rect x="0.500" y="1" width="14.500" height="14" rx="1" fill="#16a8a0"/><rect x="0.500" y="14" width="14.500" height="1.200" fill="#0c7d77"/><path d="M4.500 3.300v3.400M2.800 5h3.400M11 3.300v3.400M9.300 5h3.400M4.500 9.300v3.400M2.800 11h3.400M11 9.300v3.400M9.300 11h3.400" stroke="#c9fbf5" stroke-width=".8"/></svg>
<svg class="jp" style="left:32px;top:318.2px" width="53" height="15"><text x="0" y="12" fill="#000" textLength="52" lengthAdjust="spacingAndGlyphs">要素データ</text></svg>
<svg class="ic" style="left:236px;top:318px" width="9" height="15"><path d="M1 1L8 7.500L1 14z" fill="url(#ar1)" stroke="#1f74da" stroke-width=".9" stroke-linejoin="round"/></svg>
<div style="left:8px;top:338px;width:249px;height:24px;background:linear-gradient(#e8f0fc 0%,#e2eafa 6%,#cbd9f1 50%,#cbd9f1 100%);"></div>
<svg class="ic" style="left:10px;top:342px" width="16" height="16"><rect x="0" y="9.500" width="16" height="6" fill="#f8c4a6"/><rect x="0" y="9.500" width="16" height="1" fill="#e59a73"/><rect x="0" y="3" width="5" height="6.500" fill="#c9c9c9"/><rect x="11" y="3" width="5" height="6.500" fill="#7fe3dc"/><path d="M0.500 6.200H4M2.600 4.300l2 1.900-2 1.900z" stroke="#3c3c3c" stroke-width="1" fill="#3c3c3c"/><path d="M15.500 6.200H12M13.400 4.300l-2 1.900 2 1.900z" stroke="#0c7d77" stroke-width="1" fill="#0c7d77"/><path d="M8 0v3M5.800 2.600h4.400L8 5.400z" stroke="#d9141c" stroke-width="1.4" fill="#d9141c"/><path d="M7 10.300h3.200l-2.800 2.200 3 0.400-2.600 2.400" stroke="#3a1d10" stroke-width="1.3" fill="none"/></svg>
<svg class="jp" style="left:32px;top:342.2px" width="25" height="15"><text x="0" y="12" fill="#000" textLength="24" lengthAdjust="spacingAndGlyphs">荷重</text></svg>
<svg class="ic" style="left:234px;top:345px" width="14" height="9"><defs><linearGradient id="ad1" x1="0" y1="0" x2="0" y2="1"><stop offset="0" stop-color="#8fc6f7"/><stop offset=".5" stop-color="#3f97ea"/><stop offset="1" stop-color="#1c6fd6"/></linearGradient></defs><path d="M1 1H13L7 7.600z" fill="url(#ad1)" stroke="#3a8de3" stroke-width=".9" stroke-linejoin="round"/></svg>
<svg class="ic" style="left:11px;top:366px" width="18" height="19"><g transform="translate(2,0) rotate(-8 8 9)"><defs><linearGradient id="fo1" x1="0" y1="0" x2="0" y2="1"><stop offset="0" stop-color="#f6c7ac"/><stop offset=".6" stop-color="#f0a57c"/><stop offset="1" stop-color="#d9713d"/></linearGradient></defs><path d="M0.500 3.500L9.500 3L10.500 1.200H15.500V14.500H0.500z" fill="url(#fo1)" stroke="#c0531f" stroke-width=".8" stroke-linejoin="round"/><path d="M10.800 1.200H15.500V3.200H10z" fill="#a8431a"/><path d="M0.500 14H15.500V15.300H0.500z" fill="#a8431a"/></g><g transform="translate(2.500,2)"><polygon points="3.1,10.5 8.6,11.8 8.6,14.2 3.1,12.6" fill="#8fd79a" stroke="#3c8b57" stroke-width=".5"/><polygon points="8.6,11.8 12.1,9.4 12.1,11.6 8.6,14.2" fill="#5fb870" stroke="#3c8b57" stroke-width=".5"/><polygon points="3.1,10.5 6.8,8.2 12.1,9.4 8.6,11.8" fill="#d3f7d6" stroke="#3c8b57" stroke-width=".5"/><path d="M7.500 4V6.500" stroke="#d9141c" stroke-width="1.4"/><path d="M5.500 5.500h4l-2 4z" fill="#d9141c"/></g><path d="M3.500 12.500v6M0.500 15.500h6" stroke="#d9141c" stroke-width="1.5"/></svg>
<div style="left:33px;top:365px;width:23px;height:21px;border:1px solid #7d7d7d;border-radius:3px;background:linear-gradient(#e3e3e3,#cfcfcf);box-shadow:inset 0 0 0 1px rgba(255,255,255,.5);"></div>
<svg class="ic" style="left:35px;top:366px" width="20" height="19"><path d="M13.800 2c-3 0-5 2.200-5 4.800 0 2.200 1.400 3.300 2.300 4.800l.3 1.800h4.800l.3-1.800c.9-1.500 2.300-2.600 2.300-4.800 0-2.600-2-4.800-5-4.800z" fill="#efefef" stroke="#8a8a8a" stroke-width="1"/><path d="M13.400 3.500c-1.600.4-2.600 1.600-2.800 3.200" stroke="#ffffff" stroke-width="1.300" fill="none"/><path d="M11.600 13.600h4.400v5h-4.400z" fill="#7f7f7f"/><path d="M11.600 15.200h4.400M11.600 16.800h4.400" stroke="#5a5a5a" stroke-width=".6"/><path d="M6.600 1.200c-3 0-5 2.200-5 4.800 0 2.200 1.400 3.300 2.300 4.800l.3 1.800h4.800l.3-1.800c.9-1.500 2.300-2.600 2.300-4.800 0-2.600-2-4.800-5-4.800z" fill="#ffe93b" stroke="#a9941a" stroke-width="1"/><path d="M6.200 2.700c-1.600.4-2.600 1.600-2.800 3.200" stroke="#fffbd0" stroke-width="1.300" fill="none"/><path d="M4.400 12.800h4.400v5h-4.400z" fill="#8f8f8f"/><path d="M4.400 14.400h4.400M4.400 16h4.400" stroke="#5a5a5a" stroke-width=".6"/></svg>
<svg class="ic" style="left:58px;top:366px" width="18" height="19"><polygon points="1.5,12.3 9.5,14.1 9.5,17.1 1.5,15.1" fill="#8fd79a" stroke="#2f5d3c" stroke-width=".7" stroke-linejoin="round"/><polygon points="9.5,14.1 16.5,10.7 16.5,13.5 9.5,17.1" fill="#5fb870" stroke="#2f5d3c" stroke-width=".7" stroke-linejoin="round"/><polygon points="1.5,12.3 8.5,9.1 16.5,10.7 9.5,14.1" fill="#d9fbdc" stroke="#2f5d3c" stroke-width=".7" stroke-linejoin="round"/><g transform="rotate(-18 4 5)"><path d="M4 1V6.500" stroke="#a39a0c" stroke-width="1.8"/><path d="M1.600 5.500h4.800l-2.400 4z" fill="#a39a0c"/></g><path d="M8.700 0V6" stroke="#d9141c" stroke-width="2"/><path d="M6.100 5h5.200l-2.600 4z" fill="#d9141c"/><g transform="rotate(22 14 5)"><path d="M14 1V7" stroke="#12aaa5" stroke-width="1.8"/><path d="M11.600 6h4.800l-2.400 4z" fill="#12aaa5"/></g></svg>
<svg class="ic" style="left:82px;top:367px" width="17" height="17"><circle cx="8" cy="8.500" r="7.200" fill="#fafafa" stroke="#b9b9b9" stroke-width="1.1"/><path d="M8 3v5.700h4.600" stroke="#9b9b9b" stroke-width="1.3" fill="none"/><path d="M8 1.600v1.200M14.900 8.500h-1.200M8 15.400v-1.200M1.100 8.500h1.200M11.500 2.600l-.6 1M13.900 5l-1 .6M4.500 2.600l.6 1M2.100 5l1 .6M2.100 12l1-.6M4.500 14.400l.6-1" stroke="#b9b9b9" stroke-width=".7"/><path d="M12 10.800l4.600 2.200-4.600 2.400z" fill="#a9a9a9"/></svg>
<svg class="ic" style="left:104px;top:367px" width="18" height="17"><path d="M0.500 9.500c1.200 0 1.300-4.500 2.600-4.500s1.400 9.600 2.900 9.600S7.400 2 9 2s1.500 12.700 3 12.700S13.300 5 14.600 5s1.300 4.500 2.400 4.500" stroke="#a6a6a6" stroke-width="1.3" fill="none"/><path d="M14.300 13.400l3.500 1.700-3.500 1.700z" fill="#a6a6a6"/></svg>
<div style="left:8px;top:388px;width:249px;height:444px;background:#fff;border:1px solid #828790;"></div>
<svg class="ic" style="left:17px;top:395.5px" width="7" height="7"><path d="M5.800 0.800V6H0.600z" fill="#5a5a5a" stroke="#262626" stroke-width=".8" stroke-linejoin="round"/></svg>
<svg class="ic" style="left:32px;top:390px" width="16" height="16"><path d="M0.500 3.500L9.500 3L10.500 1.200H15.500V14.500H0.500z" fill="url(#fo1)" stroke="#c0531f" stroke-width=".8" stroke-linejoin="round"/><path d="M10.800 1.200H15.500V3.200H10z" fill="#a8431a"/><path d="M0.500 14H15.500V15.300H0.500z" fill="#a8431a"/><polygon points="3.1,9.7 8.6,11 8.6,13.4 3.1,11.8" fill="#8fd79a" stroke="#3c8b57" stroke-width=".5"/><polygon points="8.6,11 12.1,8.6 12.1,10.8 8.6,13.4" fill="#5fb870" stroke="#3c8b57" stroke-width=".5"/><polygon points="3.1,9.7 6.8,7.4 12.1,8.6 8.6,11" fill="#d3f7d6" stroke="#3c8b57" stroke-width=".5"/><path d="M7.500 4V6" stroke="#d9141c" stroke-width="1.4"/><path d="M5.500 5h4l-2 4z" fill="#d9141c"/></svg>
<svg class="jp" style="left:54px;top:390.2px" width="28" height="15"><text x="0" y="12" fill="#000" textLength="27" lengthAdjust="spacingAndGlyphs">ケース</text></svg>
<svg class="ic" style="left:37px;top:413.5px" width="7" height="7"><path d="M5.800 0.800V6H0.600z" fill="#5a5a5a" stroke="#262626" stroke-width=".8" stroke-linejoin="round"/></svg>
<div style="left:52px;top:410px;width:13px;height:13px;border:1px solid #8e8f8f;background:linear-gradient(135deg,#dfe3e8,#f7f8fa 60%,#fff);"></div>
<svg class="ic" style="left:53px;top:411px" width="11" height="11"><path d="M2 5.200l1.400-.9 1.300 2.600C5.800 4 7.300 2 9.600.6L10 1.200C8 3.400 6.600 6 5.400 9.800H4z" fill="#2a3fa0"/></svg>
<svg class="ic" style="left:71px;top:408px" width="16" height="16"><path d="M0.500 3.500L9.500 3L10.500 1.200H15.500V14.500H0.500z" fill="url(#fo1)" stroke="#c0531f" stroke-width=".8" stroke-linejoin="round"/><path d="M10.800 1.200H15.500V3.200H10z" fill="#a8431a"/><path d="M0.500 14H15.500V15.300H0.500z" fill="#a8431a"/><polygon points="3.1,9.7 8.6,11 8.6,13.4 3.1,11.8" fill="#8fd79a" stroke="#3c8b57" stroke-width=".5"/><polygon points="8.6,11 12.1,8.6 12.1,10.8 8.6,13.4" fill="#5fb870" stroke="#3c8b57" stroke-width=".5"/><polygon points="3.1,9.7 6.8,7.4 12.1,8.6 8.6,11" fill="#d3f7d6" stroke="#3c8b57" stroke-width=".5"/><path d="M7.500 4V6" stroke="#d9141c" stroke-width="1.4"/><path d="M5.500 5h4l-2 4z" fill="#d9141c"/></svg>
<span class="tx" style="left:92px;top:408px;font-size:12px;line-height:16px;color:#000;letter-spacing:-0.270px;">Geometry load case 1</span>
<svg class="ic" style="left:238px;top:406px" width="17" height="18"><path d="M2.500 6.500H12.500L11.700 17H3.300z" fill="#9fe0a0" stroke="#5b6b5d" stroke-width="1"/><path d="M1.500 5.200H13.500V6.800H1.500z" fill="#8a8f8c" stroke="#4f5451" stroke-width=".6"/><path d="M7 1.200l8.500 5.200-.7 1-8.600-5.200z" fill="#9a9e9c" stroke="#4f5451" stroke-width=".6"/><path d="M9.600 0.800l1.800 1.100-.6.9-1.800-1.100z" fill="#6b6f6d"/><path d="M5.600 13.200l1.900-3.400 1.900 3.400zM6.600 12.400h1.800" stroke="#3c8b4c" stroke-width=".9" fill="none"/></svg>
<svg class="ic" style="left:57px;top:431.5px" width="7" height="7"><path d="M5.800 0.800V6H0.600z" fill="#5a5a5a" stroke="#262626" stroke-width=".8" stroke-linejoin="round"/></svg>
<div style="left:69px;top:425px;width:187px;height:18px;border:1px solid #d9d9d9;border-radius:3px;background:linear-gradient(#fafafa,#e9e9e9);"></div>
<svg class="ic" style="left:72px;top:426px" width="16" height="16"><polygon points="0.5,10.8 8.5,12.6 8.5,15.6 0.5,13.6" fill="#5cc3cf" stroke="#2b7f8c" stroke-width=".7" stroke-linejoin="round"/><polygon points="8.5,12.6 15.5,9.2 15.5,12 8.5,15.6" fill="#2f9fb0" stroke="#2b7f8c" stroke-width=".7" stroke-linejoin="round"/><polygon points="0.5,10.8 7.5,7.6 15.5,9.2 8.5,12.6" fill="#b6ecf2" stroke="#2b7f8c" stroke-width=".7" stroke-linejoin="round"/><path d="M7.500 0V6" stroke="#a3244a" stroke-width="2.2"/><path d="M4.500 5h6l-3 4z" fill="#a3244a"/></svg>
<svg class="jp" style="left:94px;top:426.2px" width="42" height="15"><text x="0" y="12" fill="#000" textLength="41" lengthAdjust="spacingAndGlyphs" xml:space="preserve">荷重 [3]</text></svg>
<svg class="ic" style="left:92px;top:444px" width="16" height="16"><polygon points="0.5,10.8 8.5,12.6 8.5,15.6 0.5,13.6" fill="#86cf93" stroke="#2f5d3c" stroke-width=".7" stroke-linejoin="round"/><polygon points="8.5,12.6 15.5,9.2 15.5,12 8.5,15.6" fill="#5fb870" stroke="#2f5d3c" stroke-width=".7" stroke-linejoin="round"/><polygon points="0.5,10.8 7.5,7.6 15.5,9.2 8.5,12.6" fill="#d3f7d6" stroke="#2f5d3c" stroke-width=".7" stroke-linejoin="round"/><path d="M7.500 0V6" stroke="#d9141c" stroke-width="2.2"/><path d="M4.500 5h6l-3 4z" fill="#d9141c"/></svg>
<svg class="jp" style="left:114px;top:444.2px" width="25" height="15"><text x="0" y="12" fill="#000" textLength="24" lengthAdjust="spacingAndGlyphs">荷重</text></svg>
<svg class="ic" style="left:92px;top:462px" width="16" height="16"><polygon points="0.5,10.8 8.5,12.6 8.5,15.6 0.5,13.6" fill="#86cf93" stroke="#2f5d3c" stroke-width=".7" stroke-linejoin="round"/><polygon points="8.5,12.6 15.5,9.2 15.5,12 8.5,15.6" fill="#5fb870" stroke="#2f5d3c" stroke-width=".7" stroke-linejoin="round"/><polygon points="0.5,10.8 7.5,7.6 15.5,9.2 8.5,12.6" fill="#d3f7d6" stroke="#2f5d3c" stroke-width=".7" stroke-linejoin="round"/><path d="M7.500 0V6" stroke="#d9141c" stroke-width="2.2"/><path d="M4.500 5h6l-3 4z" fill="#d9141c"/></svg>
<svg class="jp" style="left:114px;top:462.2px" width="25" height="15"><text x="0" y="12" fill="#000" textLength="24" lengthAdjust="spacingAndGlyphs">荷重</text></svg>
<svg class="ic" style="left:92px;top:480px" width="16" height="16"><polygon points="0.5,10.8 8.5,12.6 8.5,15.6 0.5,13.6" fill="#86cf93" stroke="#2f5d3c" stroke-width=".7" stroke-linejoin="round"/><polygon points="8.5,12.6 15.5,9.2 15.5,12 8.5,15.6" fill="#5fb870" stroke="#2f5d3c" stroke-width=".7" stroke-linejoin="round"/><polygon points="0.5,10.8 7.5,7.6 15.5,9.2 8.5,12.6" fill="#d3f7d6" stroke="#2f5d3c" stroke-width=".7" stroke-linejoin="round"/><path d="M7.500 0V6" stroke="#d9141c" stroke-width="2.2"/><path d="M4.500 5h6l-3 4z" fill="#d9141c"/></svg>
<svg class="jp" style="left:114px;top:480.2px" width="25" height="15"><text x="0" y="12" fill="#000" textLength="24" lengthAdjust="spacingAndGlyphs">荷重</text></svg>
<svg class="ic" style="left:31px;top:497px" width="17" height="17"><polygon points="1.5,12.3 9.5,14.1 9.5,17.1 1.5,15.1" fill="#8fd79a" stroke="#2f5d3c" stroke-width=".7" stroke-linejoin="round"/><polygon points="9.5,14.1 16.5,10.7 16.5,13.5 9.5,17.1" fill="#5fb870" stroke="#2f5d3c" stroke-width=".7" stroke-linejoin="round"/><polygon points="1.5,12.3 8.5,9.1 16.5,10.7 9.5,14.1" fill="#d9fbdc" stroke="#2f5d3c" stroke-width=".7" stroke-linejoin="round"/><g transform="rotate(-18 4 5)"><path d="M4 1V6.500" stroke="#a39a0c" stroke-width="1.8"/><path d="M1.600 5.500h4.800l-2.400 4z" fill="#a39a0c"/></g><path d="M8.700 0V6" stroke="#d9141c" stroke-width="2"/><path d="M6.100 5h5.200l-2.600 4z" fill="#d9141c"/><g transform="rotate(22 14 5)"><path d="M14 1V7" stroke="#12aaa5" stroke-width="1.8"/><path d="M11.600 6h4.800l-2.400 4z" fill="#12aaa5"/></g></svg>
<svg class="jp" style="left:54px;top:498.2px" width="55" height="15"><text x="0" y="12" fill="#000" textLength="54" lengthAdjust="spacingAndGlyphs">組み合わせ</text></svg>
<svg class="ic" style="left:31px;top:516px" width="17" height="17"><circle cx="8" cy="8.500" r="7.200" fill="#ffffff" stroke="#129c96" stroke-width="1.1"/><path d="M8 3v5.700h4.600" stroke="#0d7d78" stroke-width="1.3" fill="none"/><path d="M8 1.600v1.200M14.900 8.500h-1.200M8 15.400v-1.200M1.100 8.500h1.200M11.500 2.600l-.6 1M13.900 5l-1 .6M4.500 2.600l.6 1M2.100 5l1 .6M2.100 12l1-.6M4.500 14.400l.6-1" stroke="#129c96" stroke-width=".7"/><path d="M12 10.800l4.600 2.200-4.600 2.400z" fill="#129c96"/></svg>
<svg class="jp" style="left:54px;top:516.2px" width="73" height="15"><text x="0" y="12" fill="#000" textLength="72" lengthAdjust="spacingAndGlyphs">時間依存係数</text></svg>
<svg class="ic" style="left:31px;top:534px" width="17" height="17"><path d="M0.500 9.500c1.200 0 1.300-4.500 2.600-4.500s1.400 9.600 2.900 9.600S7.400 2 9 2s1.500 12.700 3 12.700S13.300 5 14.600 5s1.300 4.500 2.400 4.500" stroke="#129c96" stroke-width="1.3" fill="none"/><path d="M14.300 13.400l3.500 1.700-3.500 1.700z" fill="#129c96"/></svg>
<svg class="jp" style="left:54px;top:534.2px" width="85" height="15"><text x="0" y="12" fill="#000" textLength="84" lengthAdjust="spacingAndGlyphs">周波数依存係数</text></svg>
<div style="left:8px;top:832px;width:249px;height:24px;background:linear-gradient(#e8f0fc 0%,#e2eafa 6%,#cbd9f1 50%,#cbd9f1 100%);"></div>
<svg class="ic" style="left:10px;top:836px" width="16" height="16"><rect x="0.500" y="10" width="15.500" height="5" fill="#c8efc2"/><rect x="0.500" y="9.800" width="15.500" height="1.800" fill="#118f86"/><path d="M1 15l2.500-3.400M3.600 15l2.500-3.400M6.200 15l2.500-3.400M8.800 15l2.500-3.400M11.400 15l2.500-3.400M14 15l2-2.800" stroke="#2aa85a" stroke-width="1.2"/><rect x="2" y="4" width="3.400" height="6" fill="#bdbdbd"/><rect x="10.500" y="4" width="3.400" height="6" fill="#bdbdbd"/><path d="M2 5.500l3.400-1.500M2 7.500l3.400-1.500M2 9.500l3.400-1.500M10.500 5.500l3.400-1.500M10.500 7.500l3.400-1.500M10.500 9.500l3.400-1.500" stroke="#555" stroke-width=".9"/></svg>
<svg class="jp" style="left:32px;top:836.2px" width="25" height="15"><text x="0" y="12" fill="#000" textLength="24" lengthAdjust="spacingAndGlyphs">拘束</text></svg>
<svg class="ic" style="left:236px;top:836px" width="9" height="15"><path d="M1 1L8 7.500L1 14z" fill="url(#ar1)" stroke="#1f74da" stroke-width=".9" stroke-linejoin="round"/></svg>
<div style="left:8px;top:856px;width:249px;height:24px;background:linear-gradient(#e8f0fc 0%,#e2eafa 6%,#cbd9f1 50%,#cbd9f1 100%);"></div>
<svg class="ic" style="left:10px;top:860px" width="16" height="16"><path d="M0.500 1.500L8 5.600L0.500 10z" fill="#f5df3a"/><path d="M0.500 1.500L8 5.600L2.400 7z" fill="#fff27a"/><path d="M0.500 10L2.400 7 8 5.600z" fill="#c9ad14"/><path d="M8.500 2h6.800v6.800H8.500z" fill="#12a39b"/><path d="M8.500 2L10 0.800h6.500L15.300 2z" fill="#49c9c1"/><path d="M15.300 2l1.200-1.200v6.800l-1.200 1.200z" fill="#0b7c76"/><path d="M1 10.200h13v4.800H1z" fill="#8fd79a"/><path d="M1 10.200l1.500-1.400h13L14 10.200z" fill="#b5ecbc"/><path d="M14 10.200l1.500-1.400v4.800L14 15z" fill="#5fb870"/></svg>
<svg class="jp" style="left:32px;top:860.2px" width="50" height="15"><text x="0" y="12" fill="#000" textLength="49" lengthAdjust="spacingAndGlyphs">要素タイプ</text></svg>
<svg class="ic" style="left:236px;top:860px" width="9" height="15"><path d="M1 1L8 7.500L1 14z" fill="url(#ar1)" stroke="#1f74da" stroke-width=".9" stroke-linejoin="round"/></svg>
<div style="left:8px;top:880px;width:249px;height:24px;background:linear-gradient(#e8f0fc 0%,#e2eafa 6%,#cbd9f1 50%,#cbd9f1 100%);"></div>
<svg class="ic" style="left:10px;top:884px" width="16" height="16"><defs><radialGradient id="glb" cx=".4" cy=".35" r=".7"><stop offset="0" stop-color="#8ff5ea"/><stop offset=".55" stop-color="#18b3a7"/><stop offset="1" stop-color="#0a6f68"/></radialGradient></defs><circle cx="8.600" cy="6.400" r="5.100" fill="url(#glb)"/><path d="M7 2.400c2-.4 3 .5 2.200 1.600s-2.400.5-2.600 2 1.600 1.300 1.500 2.700" stroke="#59c979" stroke-width="1.4" fill="none" opacity=".8"/><path d="M3.600 1C0.400 4.600 1.300 10.400 6 12.300c3 1 5.600-.2 7.200-2.200" stroke="#b5451a" stroke-width="1.5" fill="none"/><path d="M7.200 12.200h1.600v2H7.200z" fill="#d9b23a"/><path d="M4 14.200h8v1.400H4z" fill="#b5451a"/></svg>
<svg class="jp" style="left:32px;top:884.2px" width="61" height="15"><text x="0" y="12" fill="#000" textLength="60" lengthAdjust="spacingAndGlyphs">基準座標系</text></svg>
<svg class="ic" style="left:236px;top:884px" width="9" height="15"><path d="M1 1L8 7.500L1 14z" fill="url(#ar1)" stroke="#1f74da" stroke-width=".9" stroke-linejoin="round"/></svg>
<div style="left:10px;top:904px;width:53px;height:18px;border:1px solid #b4b4b4;border-top:none;background:linear-gradient(#f5f5f5,#e4e4e4);"></div>
<svg class="jp" style="left:20px;top:905.2px" width="31" height="15"><text x="0" y="12" fill="#000" textLength="30" lengthAdjust="spacingAndGlyphs">ジオ…</text></svg>
<div style="left:62px;top:903px;width:50px;height:21px;border:1px solid #b4b4b4;border-top:none;background:#fff;"></div>
<svg class="jp" style="left:77px;top:906.2px" width="20" height="15"><text x="0" y="12" fill="#000" textLength="19" lengthAdjust="spacingAndGlyphs">メ…</text></svg>
<div style="left:112px;top:488px;width:388px;height:459px;border-radius:8px;background:#5c6470;box-shadow:0 1px 5px 1px rgba(0,0,0,.38),0 0 2px rgba(0,0,0,.4);"></div>
<div style="left:113px;top:489px;width:386px;height:457px;border-radius:7px;background:#f3f6fa;"></div>
<div style="left:114px;top:490px;width:384px;height:455px;border-radius:6px;background:linear-gradient(100deg,#e1e7ef 0%,#d2dbe6 28%,#cad5e2 60%,#ced8e4 100%);"></div>
<div style="left:118px;top:516px;width:376px;height:425px;border:1px solid rgba(255,255,255,.8);"></div>
<div style="left:119px;top:517px;width:374px;height:423px;border:1px solid #6f7784;background:#f0f0f0;"></div>
<svg class="ic" style="left:120px;top:494px" width="17" height="17"><circle cx="5" cy="10.500" r="3.600" fill="none" stroke="#14a39d" stroke-width="2.2"/><path d="M5 6.200h3l1-1.600h1.200l-.6 2.600H5z" fill="#14a39d"/><path d="M10.500 9h4.500v1.500h-2.900v1.200h2.500v1.400h-2.500v1.200h3V16h-4.600z" fill="#14a39d"/><path d="M1 15.500l1.300-3.600 9.400-9.600 2.500 2.400-9.500 9.600z" fill="#f3d43b" stroke="#8a6d1c" stroke-width=".7" stroke-linejoin="round"/><path d="M11.700 2.300l1.300-1.300c.7-.6 1.500-.5 2.100.1s.8 1.500.2 2.100l-1.100 1.500z" fill="#e0503f" stroke="#8a2d22" stroke-width=".6"/><path d="M1 15.500l1.300-3.600 2.400 2.400z" fill="#f1d5b0" stroke="#8a6d1c" stroke-width=".5"/><path d="M1 15.500l.5-1.400 1 .9z" fill="#333"/></svg>
<svg class="jp" style="left:141px;top:495.2px" width="84" height="15"><text x="0" y="12" fill="#15213f" textLength="83" lengthAdjust="spacingAndGlyphs">材料特性の編集</text></svg>
<div style="left:445px;top:489px;width:49px;height:20px;border-radius:0 0 5px 5px;background:rgba(255,255,255,.6);"></div>
<div style="left:446px;top:489px;width:47px;height:19px;border-radius:0 0 4px 4px;background:#6f7a8a;"></div>
<div style="left:447px;top:489px;width:45px;height:18px;border-radius:0 0 3px 3px;background:linear-gradient(#dde3ec 0%,#d3dbe6 50%,#cbd4e1 100%);box-shadow:inset 0 0 0 1px rgba(255,255,255,.55);"></div>
<svg class="ic" style="left:464px;top:493px" width="14" height="12"><path d="M0.800 0.800h3.900l1.600 2l1.600-2h3.900l-3.600 4.200l3.600 4.200h-3.900l-1.600-2l-1.600 2h-3.900l3.600-4.200z" fill="#fff" stroke="#3f4656" stroke-width=".9" stroke-linejoin="round"/></svg>
<svg class="jp" style="left:152px;top:531.2px" width="25" height="15"><text x="0" y="12" fill="#000" textLength="24" lengthAdjust="spacingAndGlyphs">名前</text></svg>
<div style="left:242px;top:527px;width:212px;height:20px;border:1px solid #dfe3ea;border-top-color:#abadb3;border-radius:2px;background:#fff;"></div>
<span class="tx" style="left:246px;top:529px;font-size:12px;line-height:16px;color:#000;letter-spacing:-0.558px;">MA1</span>
<div style="left:152px;top:566px;width:331px;height:106px;border:1px solid #d5dfe5;border-radius:3px;box-shadow:inset 0 0 0 1px rgba(255,255,255,.8);"></div>
<div style="left:160px;top:558px;width:68px;height:14px;background:#f0f0f0;"></div>
<svg class="jp" style="left:162px;top:557.2px" width="65" height="15"><text x="0" y="12" fill="#000" textLength="64" lengthAdjust="spacingAndGlyphs">含まれる特性</text></svg>
<div style="left:162px;top:582px;width:13px;height:13px;border:1px solid #8e8f8f;background:linear-gradient(135deg,#d0d3d6 0%,#e8eaec 45%,#f9f9f9 100%);box-shadow:inset 0 0 0 1px #f4f4f4;"></div>
<svg class="jp" style="left:180px;top:581.2px" width="37" height="15"><text x="0" y="12" fill="#000" textLength="36" lengthAdjust="spacingAndGlyphs">熱効果</text></svg>
<div style="left:162px;top:604px;width:13px;height:13px;border:1px solid #8e8f8f;background:linear-gradient(135deg,#d0d3d6 0%,#e8eaec 45%,#f9f9f9 100%);box-shadow:inset 0 0 0 1px #f4f4f4;"></div>
<svg class="jp" style="left:180px;top:603.2px" width="61" height="15"><text x="0" y="12" fill="#000" textLength="60" lengthAdjust="spacingAndGlyphs">成熟度効果</text></svg>
<div style="left:162px;top:626px;width:13px;height:13px;border:1px solid #8e8f8f;background:linear-gradient(135deg,#d0d3d6 0%,#e8eaec 45%,#f9f9f9 100%);box-shadow:inset 0 0 0 1px #f4f4f4;"></div>
<svg class="jp" style="left:180px;top:625.2px" width="36" height="15"><text x="0" y="12" fill="#000" textLength="35" lengthAdjust="spacingAndGlyphs">クリープ</text></svg>
<div style="left:162px;top:648px;width:13px;height:13px;border:1px solid #8e8f8f;background:linear-gradient(135deg,#d0d3d6 0%,#e8eaec 45%,#f9f9f9 100%);box-shadow:inset 0 0 0 1px #f4f4f4;"></div>
<svg class="jp" style="left:180px;top:647.2px" width="85" height="15"><text x="0" y="12" fill="#000" textLength="84" lengthAdjust="spacingAndGlyphs">付加動的面質量</text></svg>
<div style="left:321px;top:582px;width:13px;height:13px;border:1px solid #8e8f8f;background:linear-gradient(135deg,#d0d3d6 0%,#e8eaec 45%,#f9f9f9 100%);box-shadow:inset 0 0 0 1px #f4f4f4;"></div>
<svg class="jp" style="left:339px;top:581.2px" width="49" height="15"><text x="0" y="12" fill="#000" textLength="48" lengthAdjust="spacingAndGlyphs">濃度効果</text></svg>
<div style="left:321px;top:604px;width:13px;height:13px;border:1px solid #8e8f8f;background:linear-gradient(135deg,#d0d3d6 0%,#e8eaec 45%,#f9f9f9 100%);box-shadow:inset 0 0 0 1px #f4f4f4;"></div>
<svg class="jp" style="left:339px;top:603.2px" width="25" height="15"><text x="0" y="12" fill="#000" textLength="24" lengthAdjust="spacingAndGlyphs">収縮</text></svg>
<div style="left:321px;top:626px;width:13px;height:13px;border:1px solid #8e8f8f;background:linear-gradient(135deg,#d0d3d6 0%,#e8eaec 45%,#f9f9f9 100%);box-shadow:inset 0 0 0 1px #f4f4f4;"></div>
<svg class="jp" style="left:339px;top:625.2px" width="60" height="15"><text x="0" y="12" fill="#000" textLength="59" lengthAdjust="spacingAndGlyphs">レイリー減衰</text></svg>
<div style="left:321px;top:648px;width:13px;height:13px;border:1px solid #8e8f8f;background:linear-gradient(135deg,#d0d3d6 0%,#e8eaec 45%,#f9f9f9 100%);box-shadow:inset 0 0 0 1px #f4f4f4;"></div>
<svg class="jp" style="left:339px;top:647.2px" width="115" height="15"><text x="0" y="12" fill="#000" textLength="114" lengthAdjust="spacingAndGlyphs">付加動的3次元線質量</text></svg>
<div style="left:152px;top:679px;width:331px;height:24px;background:linear-gradient(#e8f0fc 0%,#e2eafa 6%,#cbd9f1 50%,#cbd9f1 100%);"></div>
<svg class="ic" style="left:153px;top:682px" width="18" height="17"><defs><linearGradient id="ck1" x1="0" y1="0" x2="0" y2="1"><stop offset="0" stop-color="#b6ecb0"/><stop offset=".5" stop-color="#7fd47c"/><stop offset="1" stop-color="#4fae58"/></linearGradient></defs><path d="M1.300 9.800L3.600 7.600L6.500 10.800C8.800 6.600 11.600 3.200 15.200 0.700L16.600 2.300C13 5.600 9.800 10 7.500 15.600L5.600 15.800z" fill="url(#ck1)" stroke="#5e9a63" stroke-width=".8" stroke-linejoin="round"/></svg>
<svg class="jp" style="left:176px;top:683.2px" width="73" height="15"><text x="0" y="12" fill="#000" textLength="72" lengthAdjust="spacingAndGlyphs">線形材料特性</text></svg>
<svg class="ic" style="left:460px;top:686px" width="14" height="9"><path d="M1 1H13L7 7.600z" fill="url(#ad1)" stroke="#3a8de3" stroke-width=".9" stroke-linejoin="round"/></svg>
<svg class="jp" style="left:161px;top:715.7px" width="47" height="15"><text x="0" y="12" fill="#000" textLength="46" lengthAdjust="spacingAndGlyphs">ヤング率*</text></svg>
<div style="left:242px;top:714px;width:160px;height:20px;border:1px solid #dfe3ea;border-top-color:#abadb3;border-radius:2px;background:#fff;"></div>
<span class="tx" style="left:315px;top:716px;font-size:12px;line-height:16px;color:#000;letter-spacing:-0.252px;">28000  N/mm²</span>
<div style="left:409px;top:713px;width:26px;height:22px;border:1px solid #707070;border-radius:3px;background:linear-gradient(#f2f2f2 0%,#ebebeb 48%,#dddddd 52%,#cfcfcf 100%);box-shadow:inset 0 0 0 1px rgba(255,255,255,.75);"></div>
<span class="tx" style="left:413px;top:714.5px;width:18px;text-align:center;font-family:'Liberation Serif',serif;font-style:italic;font-size:15px;line-height:18px;color:#222">fx</span>
<svg class="jp" style="left:161px;top:745.7px" width="56" height="15"><text x="0" y="12" fill="#000" textLength="55" lengthAdjust="spacingAndGlyphs">ポアソン比*</text></svg>
<div style="left:242px;top:744px;width:160px;height:20px;border:1px solid #dfe3ea;border-top-color:#abadb3;border-radius:2px;background:#fff;"></div>
<span class="tx" style="left:331px;top:746px;font-size:12px;line-height:16px;color:#000;letter-spacing:-1.061px;">0.2</span>
<div style="left:409px;top:743px;width:26px;height:22px;border:1px solid #707070;border-radius:3px;background:linear-gradient(#f2f2f2 0%,#ebebeb 48%,#dddddd 52%,#cfcfcf 100%);box-shadow:inset 0 0 0 1px rgba(255,255,255,.75);"></div>
<span class="tx" style="left:413px;top:744.5px;width:18px;text-align:center;font-family:'Liberation Serif',serif;font-style:italic;font-size:15px;line-height:18px;color:#222">fx</span>
<svg class="jp" style="left:161px;top:775.7px" width="49" height="15"><text x="0" y="12" fill="#000" textLength="48" lengthAdjust="spacingAndGlyphs">質量密度</text></svg>
<div style="left:242px;top:774px;width:160px;height:20px;border:1px solid #dfe3ea;border-top-color:#abadb3;border-radius:2px;background:#fff;"></div>
<span class="tx" style="left:352px;top:776px;font-size:12px;line-height:16px;color:#000;letter-spacing:0.269px;">T/mm³</span>
<div style="left:409px;top:773px;width:26px;height:22px;border:1px solid #707070;border-radius:3px;background:linear-gradient(#f2f2f2 0%,#ebebeb 48%,#dddddd 52%,#cfcfcf 100%);box-shadow:inset 0 0 0 1px rgba(255,255,255,.75);"></div>
<span class="tx" style="left:413px;top:774.5px;width:18px;text-align:center;font-family:'Liberation Serif',serif;font-style:italic;font-size:15px;line-height:18px;color:#222">fx</span>
<div style="left:152px;top:805px;width:331px;height:24px;background:linear-gradient(#e8f0fc 0%,#e2eafa 6%,#cbd9f1 50%,#cbd9f1 100%);"></div>
<svg class="ic" style="left:153px;top:808px" width="18" height="17"><path d="M1.300 9.800L3.600 7.600L6.500 10.800C8.800 6.600 11.600 3.200 15.200 0.700L16.600 2.300C13 5.600 9.800 10 7.500 15.600L5.600 15.800z" fill="url(#ck1)" stroke="#5e9a63" stroke-width=".8" stroke-linejoin="round"/></svg>
<svg class="jp" style="left:176px;top:809.2px" width="116" height="15"><text x="0" y="12" fill="#000" textLength="115" lengthAdjust="spacingAndGlyphs">全ひずみひび割れモデル</text></svg>
<svg class="ic" style="left:462px;top:809px" width="9" height="15"><path d="M1 1L8 7.500L1 14z" fill="url(#ar1)" stroke="#1f74da" stroke-width=".9" stroke-linejoin="round"/></svg>
<div style="left:152px;top:829px;width:331px;height:24px;background:linear-gradient(#e8f0fc 0%,#e2eafa 6%,#cbd9f1 50%,#cbd9f1 100%);"></div>
<svg class="ic" style="left:153px;top:832px" width="18" height="17"><path d="M1.300 9.800L3.600 7.600L6.500 10.800C8.800 6.600 11.600 3.200 15.200 0.700L16.600 2.300C13 5.600 9.800 10 7.500 15.600L5.600 15.800z" fill="url(#ck1)" stroke="#5e9a63" stroke-width=".8" stroke-linejoin="round"/></svg>
<svg class="jp" style="left:176px;top:833.2px" width="49" height="15"><text x="0" y="12" fill="#000" textLength="48" lengthAdjust="spacingAndGlyphs">引張挙動</text></svg>
<svg class="ic" style="left:462px;top:833px" width="9" height="15"><path d="M1 1L8 7.500L1 14z" fill="url(#ar1)" stroke="#1f74da" stroke-width=".9" stroke-linejoin="round"/></svg>
<div style="left:152px;top:853px;width:331px;height:24px;background:linear-gradient(#e8f0fc 0%,#e2eafa 6%,#cbd9f1 50%,#cbd9f1 100%);"></div>
<svg class="ic" style="left:153px;top:856px" width="18" height="17"><path d="M1.300 9.800L3.600 7.600L6.500 10.800C8.800 6.600 11.600 3.200 15.200 0.700L16.600 2.300C13 5.600 9.800 10 7.500 15.600L5.600 15.800z" fill="url(#ck1)" stroke="#5e9a63" stroke-width=".8" stroke-linejoin="round"/></svg>
<svg class="jp" style="left:176px;top:857.2px" width="49" height="15"><text x="0" y="12" fill="#000" textLength="48" lengthAdjust="spacingAndGlyphs">圧縮挙動</text></svg>
<svg class="ic" style="left:462px;top:857px" width="9" height="15"><path d="M1 1L8 7.500L1 14z" fill="url(#ar1)" stroke="#1f74da" stroke-width=".9" stroke-linejoin="round"/></svg>
<div style="left:152px;top:877px;width:331px;height:24px;background:linear-gradient(#e8f0fc 0%,#e2eafa 6%,#cbd9f1 50%,#cbd9f1 100%);"></div>
<svg class="ic" style="left:153px;top:880px" width="18" height="17"><path d="M1.300 9.800L3.600 7.600L6.500 10.800C8.800 6.600 11.600 3.200 15.200 0.700L16.600 2.300C13 5.600 9.800 10 7.500 15.600L5.600 15.800z" fill="url(#ck1)" stroke="#5e9a63" stroke-width=".8" stroke-linejoin="round"/></svg>
<svg class="jp" style="left:176px;top:881.2px" width="57" height="15"><text x="0" y="12" fill="#000" textLength="56" lengthAdjust="spacingAndGlyphs">せん断挙動</text></svg>
<svg class="ic" style="left:462px;top:881px" width="9" height="15"><path d="M1 1L8 7.500L1 14z" fill="url(#ar1)" stroke="#1f74da" stroke-width=".9" stroke-linejoin="round"/></svg>
<div style="left:328px;top:908px;width:73px;height:21px;border:1px solid #707070;border-radius:3px;background:linear-gradient(#f2f2f2 0%,#ebebeb 48%,#dddddd 52%,#cfcfcf 100%);box-shadow:inset 0 0 0 1px rgba(255,255,255,.75);"></div>
<svg class="jp" style="left:349px;top:910.7px" width="33" height="15"><text x="0" y="12" fill="#000" textLength="32" lengthAdjust="spacingAndGlyphs">閉じる</text></svg>
<div style="left:409px;top:908px;width:73px;height:21px;border:1px solid #707070;border-radius:3px;background:linear-gradient(#f2f2f2 0%,#ebebeb 48%,#dddddd 52%,#cfcfcf 100%);box-shadow:inset 0 0 0 1px rgba(255,255,255,.75);"></div>
<svg class="jp" style="left:430px;top:910.7px" width="32" height="15"><text x="0" y="12" fill="#000" textLength="31" lengthAdjust="spacingAndGlyphs">ヘルプ</text></svg>
</body></html>
